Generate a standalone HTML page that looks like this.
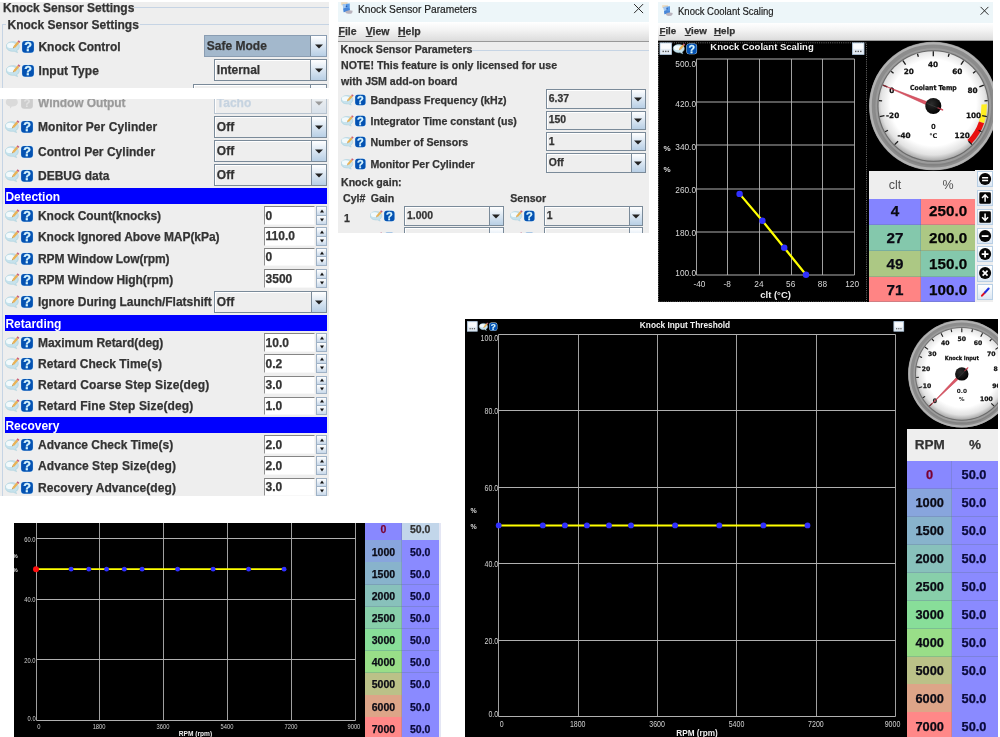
<!DOCTYPE html>
<html lang="en"><head><meta charset="utf-8"><title>Knock Sensor Settings</title>
<style>
*{box-sizing:border-box;margin:0;padding:0}
html,body{width:1000px;height:737px;overflow:hidden;background:#fff}
body{position:relative;font-family:"Liberation Sans",sans-serif;color:#333;font-size:12px;}
#w{position:absolute;left:0;top:0;width:1000px;height:737px;overflow:hidden;will-change:transform}
.p{position:absolute;overflow:hidden}
.t{position:absolute;white-space:nowrap;font-weight:bold;line-height:1;-webkit-text-stroke:0.25px currentColor}
.mn::first-letter{text-decoration:underline}
.cb{position:absolute;border:1px solid #7a8a99;background:#eee;box-shadow:inset 1px 1px 0 #fff}
.cb .tx{position:absolute;left:1.8px;top:50%;transform:translateY(-50%);font-weight:bold;white-space:nowrap;line-height:1;-webkit-text-stroke:0.25px currentColor}
.cb .bt{position:absolute;right:0;top:0;bottom:0;border-left:1px solid #7a8a99;background:linear-gradient(#fff 0%,#dde8f3 45%,#b8cfe5 100%)}
.cb .bt:after{content:"";position:absolute;left:50%;top:50%;border:4px solid transparent;border-top:4px solid #222;border-bottom:0;transform:translate(-50%,-40%)}
.sp{position:absolute}
.sp .f{position:absolute;left:0;top:0;bottom:0;background:#fff;border:1px solid #858585;border-left-color:#909090;border-right-color:#f6f6f6;border-bottom-color:#f8f8f8}
.sp .f span{position:absolute;left:0.6px;top:50%;transform:translateY(-50%);font-weight:bold;line-height:1;-webkit-text-stroke:0.25px currentColor}
.sp .u,.sp .d{position:absolute;right:0;border:1px solid #9fb2c6;background:linear-gradient(#fff,#c9d9ea)}
.sp .u:after,.sp .d:after{content:"";position:absolute;left:50%;top:50%;border:2.6px solid transparent;transform:translate(-50%,-50%)}
.sp .u:after{border-bottom:3px solid #111;border-top:0}
.sp .d:after{border-top:3px solid #111;border-bottom:0}
.bar{position:absolute;background:#0000ff;color:#fff;font-weight:bold;line-height:1;white-space:nowrap}
.bar span{position:absolute;left:0.4px;top:50%;transform:translateY(-42%)}
</style></head>
<body>
<div id="w">
<div class="p" style="left:0;top:2px;width:329px;height:85.7px;background:#eee">
<div class="p" style="left:134px;top:5px;width:195px;height:1px;background:#c6d4e4"></div>
<div class="p" style="left:2px;top:22px;width:327px;height:70px;border:1px solid #c6d4e4;border-right:0;border-bottom:0"></div>
<div class="p" style="left:6px;top:16px;width:134px;height:14px;background:#eee"></div>
<div class="t" style="left:3px;top:-0.20000000000000018px;font-size:12px;color:#333;font-weight:bold;">Knock Sensor Settings</div>
<div class="t" style="left:7.5px;top:17.1px;font-size:12px;color:#333;font-weight:bold;">Knock Sensor Settings</div>
<svg class="p" style="left:6.3px;top:37.8px;width:29.0px;height:14.0px" viewBox="0 0 29 14"><path d="M0.3 6.4 C0.3 3.4 3.2 1.7 6.8 1.7 C10.4 1.7 13.3 3.4 13.3 6.4 C13.3 8.6 12 10 10.6 10.7 L11.6 12.6 L8.2 11.2 C7.7 11.3 7.2 11.3 6.8 11.3 C3.2 11.3 0.3 9.4 0.3 6.4Z" fill="#c6e2ec" stroke="#a6cedc" stroke-width="0.6"/><ellipse cx="5.2" cy="5.4" rx="4.2" ry="2.7" fill="#f2fafc"/><path d="M6.9 8.3 L7.6 5.9 L11.5 1.5 L13.3 3.1 L9.4 7.5 Z" fill="#e9b256"/><path d="M11.5 1.5 L12.6 0.2 L14.4 1.8 L13.3 3.1 Z" fill="#c8607c"/><path d="M6.9 8.3 L7.2 7.3 L7.9 7.9 Z" fill="#777"/><rect x="15.7" y="0.5" width="12.6" height="12.6" rx="3.4" fill="#d4eefc"/><rect x="16.1" y="0.9" width="11.8" height="11.8" rx="3" fill="#0452b2"/><text x="22" y="11.3" font-family="Liberation Sans,sans-serif" font-weight="bold" font-size="12.6" fill="#d8f6ff" stroke="#d8f6ff" stroke-width="0.3" text-anchor="middle">?</text></svg>
<div class="t" style="left:38.5px;top:38.7px;font-size:12px;color:#333;font-weight:bold;letter-spacing:-0.054px;">Knock Control</div>
<div class="cb" style="left:204px;top:33px;width:123px;height:22px;background:#a3b8cc;box-shadow:none;border-color:#8a9db2;"><span class="tx" style="font-size:12px;color:#333">Safe Mode</span><div class="bt" style="width:16px;"></div></div>
<svg class="p" style="left:6.3px;top:62px;width:29.0px;height:14.0px" viewBox="0 0 29 14"><path d="M0.3 6.4 C0.3 3.4 3.2 1.7 6.8 1.7 C10.4 1.7 13.3 3.4 13.3 6.4 C13.3 8.6 12 10 10.6 10.7 L11.6 12.6 L8.2 11.2 C7.7 11.3 7.2 11.3 6.8 11.3 C3.2 11.3 0.3 9.4 0.3 6.4Z" fill="#c6e2ec" stroke="#a6cedc" stroke-width="0.6"/><ellipse cx="5.2" cy="5.4" rx="4.2" ry="2.7" fill="#f2fafc"/><path d="M6.9 8.3 L7.6 5.9 L11.5 1.5 L13.3 3.1 L9.4 7.5 Z" fill="#e9b256"/><path d="M11.5 1.5 L12.6 0.2 L14.4 1.8 L13.3 3.1 Z" fill="#c8607c"/><path d="M6.9 8.3 L7.2 7.3 L7.9 7.9 Z" fill="#777"/><rect x="15.7" y="0.5" width="12.6" height="12.6" rx="3.4" fill="#d4eefc"/><rect x="16.1" y="0.9" width="11.8" height="11.8" rx="3" fill="#0452b2"/><text x="22" y="11.3" font-family="Liberation Sans,sans-serif" font-weight="bold" font-size="12.6" fill="#d8f6ff" stroke="#d8f6ff" stroke-width="0.3" text-anchor="middle">?</text></svg>
<div class="t" style="left:38.5px;top:62.900000000000006px;font-size:12px;color:#333;font-weight:bold;letter-spacing:0.070px;">Input Type</div>
<div class="cb" style="left:214px;top:57.0px;width:113px;height:21.6px;background:#eee;"><span class="tx" style="font-size:12px;color:#333">Internal</span><div class="bt" style="width:16px;"></div></div>
<div class="cb" style="left:193px;top:81.5px;width:134px;height:22px;background:#eee;"><span class="tx" style="font-size:12px;color:#333"></span><div class="bt" style="width:16px;"></div></div>
</div>
<div class="p" style="left:0;top:98.5px;width:329px;height:397px;background:#eee">
<div class="p" style="left:2px;top:-2px;width:1px;height:400px;background:#c6d4e4"></div>
<svg class="p" style="left:5px;top:-2.7px;width:29.0px;height:14.0px" viewBox="0 0 29 14"><path d="M0.8 6.2 C0.8 3.4 3.4 1.8 6.8 1.8 C10.2 1.8 12.8 3.4 12.8 6.2 C12.8 9 10.2 10.6 6.8 10.6 L5.4 12.6 L4.6 10.2 C2.4 9.6 0.8 8.2 0.8 6.2Z" fill="#dadada"/><rect x="16.1" y="0.9" width="11.8" height="11.8" rx="3" fill="#cdcdcd"/><text x="22" y="11" font-family="Liberation Sans,sans-serif" font-weight="bold" font-size="11.5" fill="#e2e2e2" text-anchor="middle">?</text></svg>
<div class="t" style="left:38px;top:-1.5999999999999996px;font-size:12px;color:#9a9a9a;font-weight:bold;letter-spacing:-0.077px;">Window Output</div>
<div class="cb" style="left:214px;top:-6.900000000000006px;width:113px;height:22px;background:#eee;border-color:#b8c4d0;"><span class="tx" style="font-size:12px;color:#c6d3e0">Tacho</span><div class="bt" style="width:15.5px;opacity:0.4;"></div></div>
<svg class="p" style="left:5px;top:21.500000000000004px;width:29.0px;height:14.0px" viewBox="0 0 29 14"><path d="M0.3 6.4 C0.3 3.4 3.2 1.7 6.8 1.7 C10.4 1.7 13.3 3.4 13.3 6.4 C13.3 8.6 12 10 10.6 10.7 L11.6 12.6 L8.2 11.2 C7.7 11.3 7.2 11.3 6.8 11.3 C3.2 11.3 0.3 9.4 0.3 6.4Z" fill="#c6e2ec" stroke="#a6cedc" stroke-width="0.6"/><ellipse cx="5.2" cy="5.4" rx="4.2" ry="2.7" fill="#f2fafc"/><path d="M6.9 8.3 L7.6 5.9 L11.5 1.5 L13.3 3.1 L9.4 7.5 Z" fill="#e9b256"/><path d="M11.5 1.5 L12.6 0.2 L14.4 1.8 L13.3 3.1 Z" fill="#c8607c"/><path d="M6.9 8.3 L7.2 7.3 L7.9 7.9 Z" fill="#777"/><rect x="15.7" y="0.5" width="12.6" height="12.6" rx="3.4" fill="#d4eefc"/><rect x="16.1" y="0.9" width="11.8" height="11.8" rx="3" fill="#0452b2"/><text x="22" y="11.3" font-family="Liberation Sans,sans-serif" font-weight="bold" font-size="12.6" fill="#d8f6ff" stroke="#d8f6ff" stroke-width="0.3" text-anchor="middle">?</text></svg>
<div class="t" style="left:38px;top:22.6px;font-size:12px;color:#333;font-weight:bold;letter-spacing:0.060px;">Monitor Per Cylinder</div>
<div class="cb" style="left:214px;top:17.0px;width:113px;height:22px;background:#eee;"><span class="tx" style="font-size:12px;color:#333">Off</span><div class="bt" style="width:15.5px;"></div></div>
<svg class="p" style="left:5px;top:46.10000000000001px;width:29.0px;height:14.0px" viewBox="0 0 29 14"><path d="M0.3 6.4 C0.3 3.4 3.2 1.7 6.8 1.7 C10.4 1.7 13.3 3.4 13.3 6.4 C13.3 8.6 12 10 10.6 10.7 L11.6 12.6 L8.2 11.2 C7.7 11.3 7.2 11.3 6.8 11.3 C3.2 11.3 0.3 9.4 0.3 6.4Z" fill="#c6e2ec" stroke="#a6cedc" stroke-width="0.6"/><ellipse cx="5.2" cy="5.4" rx="4.2" ry="2.7" fill="#f2fafc"/><path d="M6.9 8.3 L7.6 5.9 L11.5 1.5 L13.3 3.1 L9.4 7.5 Z" fill="#e9b256"/><path d="M11.5 1.5 L12.6 0.2 L14.4 1.8 L13.3 3.1 Z" fill="#c8607c"/><path d="M6.9 8.3 L7.2 7.3 L7.9 7.9 Z" fill="#777"/><rect x="15.7" y="0.5" width="12.6" height="12.6" rx="3.4" fill="#d4eefc"/><rect x="16.1" y="0.9" width="11.8" height="11.8" rx="3" fill="#0452b2"/><text x="22" y="11.3" font-family="Liberation Sans,sans-serif" font-weight="bold" font-size="12.6" fill="#d8f6ff" stroke="#d8f6ff" stroke-width="0.3" text-anchor="middle">?</text></svg>
<div class="t" style="left:38px;top:47.20000000000001px;font-size:12px;color:#333;font-weight:bold;letter-spacing:0.020px;">Control Per Cylinder</div>
<div class="cb" style="left:214px;top:41.30000000000001px;width:113px;height:22px;background:#eee;"><span class="tx" style="font-size:12px;color:#333">Off</span><div class="bt" style="width:15.5px;"></div></div>
<svg class="p" style="left:5px;top:70.3px;width:29.0px;height:14.0px" viewBox="0 0 29 14"><path d="M0.3 6.4 C0.3 3.4 3.2 1.7 6.8 1.7 C10.4 1.7 13.3 3.4 13.3 6.4 C13.3 8.6 12 10 10.6 10.7 L11.6 12.6 L8.2 11.2 C7.7 11.3 7.2 11.3 6.8 11.3 C3.2 11.3 0.3 9.4 0.3 6.4Z" fill="#c6e2ec" stroke="#a6cedc" stroke-width="0.6"/><ellipse cx="5.2" cy="5.4" rx="4.2" ry="2.7" fill="#f2fafc"/><path d="M6.9 8.3 L7.6 5.9 L11.5 1.5 L13.3 3.1 L9.4 7.5 Z" fill="#e9b256"/><path d="M11.5 1.5 L12.6 0.2 L14.4 1.8 L13.3 3.1 Z" fill="#c8607c"/><path d="M6.9 8.3 L7.2 7.3 L7.9 7.9 Z" fill="#777"/><rect x="15.7" y="0.5" width="12.6" height="12.6" rx="3.4" fill="#d4eefc"/><rect x="16.1" y="0.9" width="11.8" height="11.8" rx="3" fill="#0452b2"/><text x="22" y="11.3" font-family="Liberation Sans,sans-serif" font-weight="bold" font-size="12.6" fill="#d8f6ff" stroke="#d8f6ff" stroke-width="0.3" text-anchor="middle">?</text></svg>
<div class="t" style="left:38px;top:71.4px;font-size:12px;color:#333;font-weight:bold;">DEBUG data</div>
<div class="cb" style="left:214px;top:65.6px;width:113px;height:22px;background:#eee;"><span class="tx" style="font-size:12px;color:#333">Off</span><div class="bt" style="width:15.5px;"></div></div>
<div class="bar" style="left:5px;top:89.5px;width:322px;height:16px;font-size:12px"><span>Detection</span></div>
<svg class="p" style="left:5px;top:110.60000000000001px;width:29.0px;height:14.0px" viewBox="0 0 29 14"><path d="M0.3 6.4 C0.3 3.4 3.2 1.7 6.8 1.7 C10.4 1.7 13.3 3.4 13.3 6.4 C13.3 8.6 12 10 10.6 10.7 L11.6 12.6 L8.2 11.2 C7.7 11.3 7.2 11.3 6.8 11.3 C3.2 11.3 0.3 9.4 0.3 6.4Z" fill="#c6e2ec" stroke="#a6cedc" stroke-width="0.6"/><ellipse cx="5.2" cy="5.4" rx="4.2" ry="2.7" fill="#f2fafc"/><path d="M6.9 8.3 L7.6 5.9 L11.5 1.5 L13.3 3.1 L9.4 7.5 Z" fill="#e9b256"/><path d="M11.5 1.5 L12.6 0.2 L14.4 1.8 L13.3 3.1 Z" fill="#c8607c"/><path d="M6.9 8.3 L7.2 7.3 L7.9 7.9 Z" fill="#777"/><rect x="15.7" y="0.5" width="12.6" height="12.6" rx="3.4" fill="#d4eefc"/><rect x="16.1" y="0.9" width="11.8" height="11.8" rx="3" fill="#0452b2"/><text x="22" y="11.3" font-family="Liberation Sans,sans-serif" font-weight="bold" font-size="12.6" fill="#d8f6ff" stroke="#d8f6ff" stroke-width="0.3" text-anchor="middle">?</text></svg>
<div class="t" style="left:38px;top:111.70000000000002px;font-size:12px;color:#333;font-weight:bold;letter-spacing:-0.053px;">Knock Count(knocks)</div>
<div class="sp" style="left:264px;top:107.9px;width:63px;height:18.8px"><div class="f" style="width:50.8px"><span style="font-size:12px">0</span></div><div class="u" style="width:10.6px;top:0;height:9.9px"></div><div class="d" style="width:10.6px;top:8.9px;height:9.9px"></div></div>
<svg class="p" style="left:5px;top:131.60000000000002px;width:29.0px;height:14.0px" viewBox="0 0 29 14"><path d="M0.3 6.4 C0.3 3.4 3.2 1.7 6.8 1.7 C10.4 1.7 13.3 3.4 13.3 6.4 C13.3 8.6 12 10 10.6 10.7 L11.6 12.6 L8.2 11.2 C7.7 11.3 7.2 11.3 6.8 11.3 C3.2 11.3 0.3 9.4 0.3 6.4Z" fill="#c6e2ec" stroke="#a6cedc" stroke-width="0.6"/><ellipse cx="5.2" cy="5.4" rx="4.2" ry="2.7" fill="#f2fafc"/><path d="M6.9 8.3 L7.6 5.9 L11.5 1.5 L13.3 3.1 L9.4 7.5 Z" fill="#e9b256"/><path d="M11.5 1.5 L12.6 0.2 L14.4 1.8 L13.3 3.1 Z" fill="#c8607c"/><path d="M6.9 8.3 L7.2 7.3 L7.9 7.9 Z" fill="#777"/><rect x="15.7" y="0.5" width="12.6" height="12.6" rx="3.4" fill="#d4eefc"/><rect x="16.1" y="0.9" width="11.8" height="11.8" rx="3" fill="#0452b2"/><text x="22" y="11.3" font-family="Liberation Sans,sans-serif" font-weight="bold" font-size="12.6" fill="#d8f6ff" stroke="#d8f6ff" stroke-width="0.3" text-anchor="middle">?</text></svg>
<div class="t" style="left:38px;top:132.70000000000002px;font-size:12px;color:#333;font-weight:bold;letter-spacing:-0.050px;">Knock Ignored Above MAP(kPa)</div>
<div class="sp" style="left:264px;top:128.6px;width:63px;height:18.8px"><div class="f" style="width:50.8px"><span style="font-size:12px">110.0</span></div><div class="u" style="width:10.6px;top:0;height:9.9px"></div><div class="d" style="width:10.6px;top:8.9px;height:9.9px"></div></div>
<svg class="p" style="left:5px;top:153.3px;width:29.0px;height:14.0px" viewBox="0 0 29 14"><path d="M0.3 6.4 C0.3 3.4 3.2 1.7 6.8 1.7 C10.4 1.7 13.3 3.4 13.3 6.4 C13.3 8.6 12 10 10.6 10.7 L11.6 12.6 L8.2 11.2 C7.7 11.3 7.2 11.3 6.8 11.3 C3.2 11.3 0.3 9.4 0.3 6.4Z" fill="#c6e2ec" stroke="#a6cedc" stroke-width="0.6"/><ellipse cx="5.2" cy="5.4" rx="4.2" ry="2.7" fill="#f2fafc"/><path d="M6.9 8.3 L7.6 5.9 L11.5 1.5 L13.3 3.1 L9.4 7.5 Z" fill="#e9b256"/><path d="M11.5 1.5 L12.6 0.2 L14.4 1.8 L13.3 3.1 Z" fill="#c8607c"/><path d="M6.9 8.3 L7.2 7.3 L7.9 7.9 Z" fill="#777"/><rect x="15.7" y="0.5" width="12.6" height="12.6" rx="3.4" fill="#d4eefc"/><rect x="16.1" y="0.9" width="11.8" height="11.8" rx="3" fill="#0452b2"/><text x="22" y="11.3" font-family="Liberation Sans,sans-serif" font-weight="bold" font-size="12.6" fill="#d8f6ff" stroke="#d8f6ff" stroke-width="0.3" text-anchor="middle">?</text></svg>
<div class="t" style="left:38px;top:154.4px;font-size:12px;color:#333;font-weight:bold;letter-spacing:-0.126px;">RPM Window Low(rpm)</div>
<div class="sp" style="left:264px;top:149.1px;width:63px;height:18.8px"><div class="f" style="width:50.8px"><span style="font-size:12px">0</span></div><div class="u" style="width:10.6px;top:0;height:9.9px"></div><div class="d" style="width:10.6px;top:8.9px;height:9.9px"></div></div>
<svg class="p" style="left:5px;top:174.60000000000002px;width:29.0px;height:14.0px" viewBox="0 0 29 14"><path d="M0.3 6.4 C0.3 3.4 3.2 1.7 6.8 1.7 C10.4 1.7 13.3 3.4 13.3 6.4 C13.3 8.6 12 10 10.6 10.7 L11.6 12.6 L8.2 11.2 C7.7 11.3 7.2 11.3 6.8 11.3 C3.2 11.3 0.3 9.4 0.3 6.4Z" fill="#c6e2ec" stroke="#a6cedc" stroke-width="0.6"/><ellipse cx="5.2" cy="5.4" rx="4.2" ry="2.7" fill="#f2fafc"/><path d="M6.9 8.3 L7.6 5.9 L11.5 1.5 L13.3 3.1 L9.4 7.5 Z" fill="#e9b256"/><path d="M11.5 1.5 L12.6 0.2 L14.4 1.8 L13.3 3.1 Z" fill="#c8607c"/><path d="M6.9 8.3 L7.2 7.3 L7.9 7.9 Z" fill="#777"/><rect x="15.7" y="0.5" width="12.6" height="12.6" rx="3.4" fill="#d4eefc"/><rect x="16.1" y="0.9" width="11.8" height="11.8" rx="3" fill="#0452b2"/><text x="22" y="11.3" font-family="Liberation Sans,sans-serif" font-weight="bold" font-size="12.6" fill="#d8f6ff" stroke="#d8f6ff" stroke-width="0.3" text-anchor="middle">?</text></svg>
<div class="t" style="left:38px;top:175.70000000000002px;font-size:12px;color:#333;font-weight:bold;letter-spacing:-0.070px;">RPM Window High(rpm)</div>
<div class="sp" style="left:264px;top:170.8px;width:63px;height:18.8px"><div class="f" style="width:50.8px"><span style="font-size:12px">3500</span></div><div class="u" style="width:10.6px;top:0;height:9.9px"></div><div class="d" style="width:10.6px;top:8.9px;height:9.9px"></div></div>
<svg class="p" style="left:5px;top:196.8px;width:29.0px;height:14.0px" viewBox="0 0 29 14"><path d="M0.3 6.4 C0.3 3.4 3.2 1.7 6.8 1.7 C10.4 1.7 13.3 3.4 13.3 6.4 C13.3 8.6 12 10 10.6 10.7 L11.6 12.6 L8.2 11.2 C7.7 11.3 7.2 11.3 6.8 11.3 C3.2 11.3 0.3 9.4 0.3 6.4Z" fill="#c6e2ec" stroke="#a6cedc" stroke-width="0.6"/><ellipse cx="5.2" cy="5.4" rx="4.2" ry="2.7" fill="#f2fafc"/><path d="M6.9 8.3 L7.6 5.9 L11.5 1.5 L13.3 3.1 L9.4 7.5 Z" fill="#e9b256"/><path d="M11.5 1.5 L12.6 0.2 L14.4 1.8 L13.3 3.1 Z" fill="#c8607c"/><path d="M6.9 8.3 L7.2 7.3 L7.9 7.9 Z" fill="#777"/><rect x="15.7" y="0.5" width="12.6" height="12.6" rx="3.4" fill="#d4eefc"/><rect x="16.1" y="0.9" width="11.8" height="11.8" rx="3" fill="#0452b2"/><text x="22" y="11.3" font-family="Liberation Sans,sans-serif" font-weight="bold" font-size="12.6" fill="#d8f6ff" stroke="#d8f6ff" stroke-width="0.3" text-anchor="middle">?</text></svg>
<div class="t" style="left:38px;top:197.9px;font-size:12px;color:#333;font-weight:bold;letter-spacing:-0.033px;">Ignore During Launch/Flatshift</div>
<div class="cb" style="left:214px;top:192.3px;width:113px;height:22px;background:#eee;"><span class="tx" style="font-size:12px;color:#333">Off</span><div class="bt" style="width:15.5px;"></div></div>
<div class="bar" style="left:5px;top:216.10000000000002px;width:322px;height:16px;font-size:12px"><span>Retarding</span></div>
<svg class="p" style="left:5px;top:237.5px;width:29.0px;height:14.0px" viewBox="0 0 29 14"><path d="M0.3 6.4 C0.3 3.4 3.2 1.7 6.8 1.7 C10.4 1.7 13.3 3.4 13.3 6.4 C13.3 8.6 12 10 10.6 10.7 L11.6 12.6 L8.2 11.2 C7.7 11.3 7.2 11.3 6.8 11.3 C3.2 11.3 0.3 9.4 0.3 6.4Z" fill="#c6e2ec" stroke="#a6cedc" stroke-width="0.6"/><ellipse cx="5.2" cy="5.4" rx="4.2" ry="2.7" fill="#f2fafc"/><path d="M6.9 8.3 L7.6 5.9 L11.5 1.5 L13.3 3.1 L9.4 7.5 Z" fill="#e9b256"/><path d="M11.5 1.5 L12.6 0.2 L14.4 1.8 L13.3 3.1 Z" fill="#c8607c"/><path d="M6.9 8.3 L7.2 7.3 L7.9 7.9 Z" fill="#777"/><rect x="15.7" y="0.5" width="12.6" height="12.6" rx="3.4" fill="#d4eefc"/><rect x="16.1" y="0.9" width="11.8" height="11.8" rx="3" fill="#0452b2"/><text x="22" y="11.3" font-family="Liberation Sans,sans-serif" font-weight="bold" font-size="12.6" fill="#d8f6ff" stroke="#d8f6ff" stroke-width="0.3" text-anchor="middle">?</text></svg>
<div class="t" style="left:38px;top:238.6px;font-size:12px;color:#333;font-weight:bold;letter-spacing:-0.037px;">Maximum Retard(deg)</div>
<div class="sp" style="left:264px;top:234.8px;width:63px;height:18.8px"><div class="f" style="width:50.8px"><span style="font-size:12px">10.0</span></div><div class="u" style="width:10.6px;top:0;height:9.9px"></div><div class="d" style="width:10.6px;top:8.9px;height:9.9px"></div></div>
<svg class="p" style="left:5px;top:258.5px;width:29.0px;height:14.0px" viewBox="0 0 29 14"><path d="M0.3 6.4 C0.3 3.4 3.2 1.7 6.8 1.7 C10.4 1.7 13.3 3.4 13.3 6.4 C13.3 8.6 12 10 10.6 10.7 L11.6 12.6 L8.2 11.2 C7.7 11.3 7.2 11.3 6.8 11.3 C3.2 11.3 0.3 9.4 0.3 6.4Z" fill="#c6e2ec" stroke="#a6cedc" stroke-width="0.6"/><ellipse cx="5.2" cy="5.4" rx="4.2" ry="2.7" fill="#f2fafc"/><path d="M6.9 8.3 L7.6 5.9 L11.5 1.5 L13.3 3.1 L9.4 7.5 Z" fill="#e9b256"/><path d="M11.5 1.5 L12.6 0.2 L14.4 1.8 L13.3 3.1 Z" fill="#c8607c"/><path d="M6.9 8.3 L7.2 7.3 L7.9 7.9 Z" fill="#777"/><rect x="15.7" y="0.5" width="12.6" height="12.6" rx="3.4" fill="#d4eefc"/><rect x="16.1" y="0.9" width="11.8" height="11.8" rx="3" fill="#0452b2"/><text x="22" y="11.3" font-family="Liberation Sans,sans-serif" font-weight="bold" font-size="12.6" fill="#d8f6ff" stroke="#d8f6ff" stroke-width="0.3" text-anchor="middle">?</text></svg>
<div class="t" style="left:38px;top:259.59999999999997px;font-size:12px;color:#333;font-weight:bold;letter-spacing:0.050px;">Retard Check Time(s)</div>
<div class="sp" style="left:264px;top:255.89999999999998px;width:63px;height:18.8px"><div class="f" style="width:50.8px"><span style="font-size:12px">0.2</span></div><div class="u" style="width:10.6px;top:0;height:9.9px"></div><div class="d" style="width:10.6px;top:8.9px;height:9.9px"></div></div>
<svg class="p" style="left:5px;top:279.8px;width:29.0px;height:14.0px" viewBox="0 0 29 14"><path d="M0.3 6.4 C0.3 3.4 3.2 1.7 6.8 1.7 C10.4 1.7 13.3 3.4 13.3 6.4 C13.3 8.6 12 10 10.6 10.7 L11.6 12.6 L8.2 11.2 C7.7 11.3 7.2 11.3 6.8 11.3 C3.2 11.3 0.3 9.4 0.3 6.4Z" fill="#c6e2ec" stroke="#a6cedc" stroke-width="0.6"/><ellipse cx="5.2" cy="5.4" rx="4.2" ry="2.7" fill="#f2fafc"/><path d="M6.9 8.3 L7.6 5.9 L11.5 1.5 L13.3 3.1 L9.4 7.5 Z" fill="#e9b256"/><path d="M11.5 1.5 L12.6 0.2 L14.4 1.8 L13.3 3.1 Z" fill="#c8607c"/><path d="M6.9 8.3 L7.2 7.3 L7.9 7.9 Z" fill="#777"/><rect x="15.7" y="0.5" width="12.6" height="12.6" rx="3.4" fill="#d4eefc"/><rect x="16.1" y="0.9" width="11.8" height="11.8" rx="3" fill="#0452b2"/><text x="22" y="11.3" font-family="Liberation Sans,sans-serif" font-weight="bold" font-size="12.6" fill="#d8f6ff" stroke="#d8f6ff" stroke-width="0.3" text-anchor="middle">?</text></svg>
<div class="t" style="left:38px;top:280.9px;font-size:12px;color:#333;font-weight:bold;letter-spacing:0.121px;">Retard Coarse Step Size(deg)</div>
<div class="sp" style="left:264px;top:277.0px;width:63px;height:18.8px"><div class="f" style="width:50.8px"><span style="font-size:12px">3.0</span></div><div class="u" style="width:10.6px;top:0;height:9.9px"></div><div class="d" style="width:10.6px;top:8.9px;height:9.9px"></div></div>
<svg class="p" style="left:5px;top:300.8px;width:29.0px;height:14.0px" viewBox="0 0 29 14"><path d="M0.3 6.4 C0.3 3.4 3.2 1.7 6.8 1.7 C10.4 1.7 13.3 3.4 13.3 6.4 C13.3 8.6 12 10 10.6 10.7 L11.6 12.6 L8.2 11.2 C7.7 11.3 7.2 11.3 6.8 11.3 C3.2 11.3 0.3 9.4 0.3 6.4Z" fill="#c6e2ec" stroke="#a6cedc" stroke-width="0.6"/><ellipse cx="5.2" cy="5.4" rx="4.2" ry="2.7" fill="#f2fafc"/><path d="M6.9 8.3 L7.6 5.9 L11.5 1.5 L13.3 3.1 L9.4 7.5 Z" fill="#e9b256"/><path d="M11.5 1.5 L12.6 0.2 L14.4 1.8 L13.3 3.1 Z" fill="#c8607c"/><path d="M6.9 8.3 L7.2 7.3 L7.9 7.9 Z" fill="#777"/><rect x="15.7" y="0.5" width="12.6" height="12.6" rx="3.4" fill="#d4eefc"/><rect x="16.1" y="0.9" width="11.8" height="11.8" rx="3" fill="#0452b2"/><text x="22" y="11.3" font-family="Liberation Sans,sans-serif" font-weight="bold" font-size="12.6" fill="#d8f6ff" stroke="#d8f6ff" stroke-width="0.3" text-anchor="middle">?</text></svg>
<div class="t" style="left:38px;top:301.9px;font-size:12px;color:#333;font-weight:bold;letter-spacing:0.131px;">Retard Fine Step Size(deg)</div>
<div class="sp" style="left:264px;top:298.0px;width:63px;height:18.8px"><div class="f" style="width:50.8px"><span style="font-size:12px">1.0</span></div><div class="u" style="width:10.6px;top:0;height:9.9px"></div><div class="d" style="width:10.6px;top:8.9px;height:9.9px"></div></div>
<div class="bar" style="left:5px;top:318.5px;width:322px;height:15.8px;font-size:12px"><span>Recovery</span></div>
<svg class="p" style="left:5px;top:339.8px;width:29.0px;height:14.0px" viewBox="0 0 29 14"><path d="M0.3 6.4 C0.3 3.4 3.2 1.7 6.8 1.7 C10.4 1.7 13.3 3.4 13.3 6.4 C13.3 8.6 12 10 10.6 10.7 L11.6 12.6 L8.2 11.2 C7.7 11.3 7.2 11.3 6.8 11.3 C3.2 11.3 0.3 9.4 0.3 6.4Z" fill="#c6e2ec" stroke="#a6cedc" stroke-width="0.6"/><ellipse cx="5.2" cy="5.4" rx="4.2" ry="2.7" fill="#f2fafc"/><path d="M6.9 8.3 L7.6 5.9 L11.5 1.5 L13.3 3.1 L9.4 7.5 Z" fill="#e9b256"/><path d="M11.5 1.5 L12.6 0.2 L14.4 1.8 L13.3 3.1 Z" fill="#c8607c"/><path d="M6.9 8.3 L7.2 7.3 L7.9 7.9 Z" fill="#777"/><rect x="15.7" y="0.5" width="12.6" height="12.6" rx="3.4" fill="#d4eefc"/><rect x="16.1" y="0.9" width="11.8" height="11.8" rx="3" fill="#0452b2"/><text x="22" y="11.3" font-family="Liberation Sans,sans-serif" font-weight="bold" font-size="12.6" fill="#d8f6ff" stroke="#d8f6ff" stroke-width="0.3" text-anchor="middle">?</text></svg>
<div class="t" style="left:38px;top:340.9px;font-size:12px;color:#333;font-weight:bold;">Advance Check Time(s)</div>
<div class="sp" style="left:264px;top:336.8px;width:63px;height:18.8px"><div class="f" style="width:50.8px"><span style="font-size:12px">2.0</span></div><div class="u" style="width:10.6px;top:0;height:9.9px"></div><div class="d" style="width:10.6px;top:8.9px;height:9.9px"></div></div>
<svg class="p" style="left:5px;top:360.8px;width:29.0px;height:14.0px" viewBox="0 0 29 14"><path d="M0.3 6.4 C0.3 3.4 3.2 1.7 6.8 1.7 C10.4 1.7 13.3 3.4 13.3 6.4 C13.3 8.6 12 10 10.6 10.7 L11.6 12.6 L8.2 11.2 C7.7 11.3 7.2 11.3 6.8 11.3 C3.2 11.3 0.3 9.4 0.3 6.4Z" fill="#c6e2ec" stroke="#a6cedc" stroke-width="0.6"/><ellipse cx="5.2" cy="5.4" rx="4.2" ry="2.7" fill="#f2fafc"/><path d="M6.9 8.3 L7.6 5.9 L11.5 1.5 L13.3 3.1 L9.4 7.5 Z" fill="#e9b256"/><path d="M11.5 1.5 L12.6 0.2 L14.4 1.8 L13.3 3.1 Z" fill="#c8607c"/><path d="M6.9 8.3 L7.2 7.3 L7.9 7.9 Z" fill="#777"/><rect x="15.7" y="0.5" width="12.6" height="12.6" rx="3.4" fill="#d4eefc"/><rect x="16.1" y="0.9" width="11.8" height="11.8" rx="3" fill="#0452b2"/><text x="22" y="11.3" font-family="Liberation Sans,sans-serif" font-weight="bold" font-size="12.6" fill="#d8f6ff" stroke="#d8f6ff" stroke-width="0.3" text-anchor="middle">?</text></svg>
<div class="t" style="left:38px;top:361.9px;font-size:12px;color:#333;font-weight:bold;letter-spacing:0.091px;">Advance Step Size(deg)</div>
<div class="sp" style="left:264px;top:357.9px;width:63px;height:18.8px"><div class="f" style="width:50.8px"><span style="font-size:12px">2.0</span></div><div class="u" style="width:10.6px;top:0;height:9.9px"></div><div class="d" style="width:10.6px;top:8.9px;height:9.9px"></div></div>
<svg class="p" style="left:5px;top:382.1px;width:29.0px;height:14.0px" viewBox="0 0 29 14"><path d="M0.3 6.4 C0.3 3.4 3.2 1.7 6.8 1.7 C10.4 1.7 13.3 3.4 13.3 6.4 C13.3 8.6 12 10 10.6 10.7 L11.6 12.6 L8.2 11.2 C7.7 11.3 7.2 11.3 6.8 11.3 C3.2 11.3 0.3 9.4 0.3 6.4Z" fill="#c6e2ec" stroke="#a6cedc" stroke-width="0.6"/><ellipse cx="5.2" cy="5.4" rx="4.2" ry="2.7" fill="#f2fafc"/><path d="M6.9 8.3 L7.6 5.9 L11.5 1.5 L13.3 3.1 L9.4 7.5 Z" fill="#e9b256"/><path d="M11.5 1.5 L12.6 0.2 L14.4 1.8 L13.3 3.1 Z" fill="#c8607c"/><path d="M6.9 8.3 L7.2 7.3 L7.9 7.9 Z" fill="#777"/><rect x="15.7" y="0.5" width="12.6" height="12.6" rx="3.4" fill="#d4eefc"/><rect x="16.1" y="0.9" width="11.8" height="11.8" rx="3" fill="#0452b2"/><text x="22" y="11.3" font-family="Liberation Sans,sans-serif" font-weight="bold" font-size="12.6" fill="#d8f6ff" stroke="#d8f6ff" stroke-width="0.3" text-anchor="middle">?</text></svg>
<div class="t" style="left:38px;top:383.2px;font-size:12px;color:#333;font-weight:bold;letter-spacing:0.081px;">Recovery Advance(deg)</div>
<div class="sp" style="left:264px;top:379.0px;width:63px;height:18.8px"><div class="f" style="width:50.8px"><span style="font-size:12px">3.0</span></div><div class="u" style="width:10.6px;top:0;height:9.9px"></div><div class="d" style="width:10.6px;top:8.9px;height:9.9px"></div></div>
</div>
<div class="p" style="left:338px;top:2px;width:311px;height:230.5px;background:#eee"></div>
<div class="p" style="left:338px;top:2px;width:311px;height:19.5px;background:#edf6f9"></div>
<svg class="p" style="left:341.1px;top:2.0px;width:12.2px;height:12.2px" viewBox="0 0 13 13"><path d="M0.2 0.2h6.8v3.2h-6.8z" fill="#ead6b4" opacity="0.85"/><path d="M1.8 2.4 L9.3 1.5 L9.3 8.8 L3 10.8 Z" fill="#5a9ce8"/><path d="M1.8 2.4 L5.4 2 L5.2 6 L2.4 7.2 Z" fill="#a4c8f0"/><path d="M2.4 7.2 L5.2 6 L9.3 7 L9.3 8.8 L3 10.8 Z" fill="#4886d8"/><circle cx="5.9" cy="4.5" r="0.9" fill="#2a5cb0"/><path d="M4.2 10.4 Q7.6 7.8 12.4 9.2 Q12.4 13 8.4 12.6 Q5.4 13 4.2 10.4Z" fill="#b2acb6" opacity="0.9"/></svg>
<div class="t" style="left:358px;top:2.5px;font-size:11.6px;font-weight:normal;-webkit-text-stroke:0.2px #1a1a1a;color:#1a1a1a;transform-origin:0 50%;transform:scaleX(0.878)">Knock Sensor Parameters</div>
<svg class="p" style="left:629px;top:2px;width:20px;height:19.5px" viewBox="629 2 20 19.5"><path d="M634.1 4.1L643.1 13.1M643.1 4.1L634.1 13.1" stroke="#2a2a2a" stroke-width="1" fill="none"/></svg>
<div class="p" style="left:338px;top:21.5px;width:311px;height:20px;background:linear-gradient(#fff 0%,#f4f4f4 40%,#dcdcdc 100%);border-bottom:1px solid #999"></div>
<div class="t mn" style="left:338.5px;top:25.75px;font-size:10.5px;color:#333">File</div>
<div class="t mn" style="left:365.7px;top:25.75px;font-size:10.5px;color:#333">View</div>
<div class="t mn" style="left:398px;top:25.75px;font-size:10.5px;color:#333">Help</div>
<div class="p" style="left:338px;top:2px;width:311px;height:230.5px;overflow:hidden">
<div class="p" style="left:134px;top:47.5px;width:180px;height:1px;background:#c6d4e4"></div>
<div class="t" style="left:2.5px;top:42.2px;font-size:10.6px;color:#333;font-weight:bold;">Knock Sensor Parameters</div>
<div class="t" style="left:3px;top:58.2px;font-size:10.6px;color:#333;font-weight:bold;">NOTE! This feature is only licensed for use</div>
<div class="t" style="left:3px;top:74.0px;font-size:10.6px;color:#333;font-weight:bold;">with JSM add-on board</div>
<svg class="p" style="left:3.1999999999999886px;top:91.8px;width:25.52px;height:12.32px" viewBox="0 0 29 14"><path d="M0.3 6.4 C0.3 3.4 3.2 1.7 6.8 1.7 C10.4 1.7 13.3 3.4 13.3 6.4 C13.3 8.6 12 10 10.6 10.7 L11.6 12.6 L8.2 11.2 C7.7 11.3 7.2 11.3 6.8 11.3 C3.2 11.3 0.3 9.4 0.3 6.4Z" fill="#c6e2ec" stroke="#a6cedc" stroke-width="0.6"/><ellipse cx="5.2" cy="5.4" rx="4.2" ry="2.7" fill="#f2fafc"/><path d="M6.9 8.3 L7.6 5.9 L11.5 1.5 L13.3 3.1 L9.4 7.5 Z" fill="#e9b256"/><path d="M11.5 1.5 L12.6 0.2 L14.4 1.8 L13.3 3.1 Z" fill="#c8607c"/><path d="M6.9 8.3 L7.2 7.3 L7.9 7.9 Z" fill="#777"/><rect x="15.7" y="0.5" width="12.6" height="12.6" rx="3.4" fill="#d4eefc"/><rect x="16.1" y="0.9" width="11.8" height="11.8" rx="3" fill="#0452b2"/><text x="22" y="11.3" font-family="Liberation Sans,sans-serif" font-weight="bold" font-size="12.6" fill="#d8f6ff" stroke="#d8f6ff" stroke-width="0.3" text-anchor="middle">?</text></svg>
<div class="t" style="left:32.5px;top:92.8px;font-size:10.6px;color:#333;font-weight:bold;">Bandpass Frequency (kHz)</div>
<div class="cb" style="left:208px;top:87.3px;width:99.5px;height:19.6px;background:#eee;"><span class="tx" style="font-size:10.4px;color:#333">6.37</span><div class="bt" style="width:13.6px;"></div></div>
<svg class="p" style="left:3.1999999999999886px;top:113.0px;width:25.52px;height:12.32px" viewBox="0 0 29 14"><path d="M0.3 6.4 C0.3 3.4 3.2 1.7 6.8 1.7 C10.4 1.7 13.3 3.4 13.3 6.4 C13.3 8.6 12 10 10.6 10.7 L11.6 12.6 L8.2 11.2 C7.7 11.3 7.2 11.3 6.8 11.3 C3.2 11.3 0.3 9.4 0.3 6.4Z" fill="#c6e2ec" stroke="#a6cedc" stroke-width="0.6"/><ellipse cx="5.2" cy="5.4" rx="4.2" ry="2.7" fill="#f2fafc"/><path d="M6.9 8.3 L7.6 5.9 L11.5 1.5 L13.3 3.1 L9.4 7.5 Z" fill="#e9b256"/><path d="M11.5 1.5 L12.6 0.2 L14.4 1.8 L13.3 3.1 Z" fill="#c8607c"/><path d="M6.9 8.3 L7.2 7.3 L7.9 7.9 Z" fill="#777"/><rect x="15.7" y="0.5" width="12.6" height="12.6" rx="3.4" fill="#d4eefc"/><rect x="16.1" y="0.9" width="11.8" height="11.8" rx="3" fill="#0452b2"/><text x="22" y="11.3" font-family="Liberation Sans,sans-serif" font-weight="bold" font-size="12.6" fill="#d8f6ff" stroke="#d8f6ff" stroke-width="0.3" text-anchor="middle">?</text></svg>
<div class="t" style="left:32.5px;top:114.0px;font-size:10.6px;color:#333;font-weight:bold;">Integrator Time constant (us)</div>
<div class="cb" style="left:208px;top:108.5px;width:99.5px;height:19.6px;background:#eee;"><span class="tx" style="font-size:10.4px;color:#333">150</span><div class="bt" style="width:13.6px;"></div></div>
<svg class="p" style="left:3.1999999999999886px;top:134.3px;width:25.52px;height:12.32px" viewBox="0 0 29 14"><path d="M0.3 6.4 C0.3 3.4 3.2 1.7 6.8 1.7 C10.4 1.7 13.3 3.4 13.3 6.4 C13.3 8.6 12 10 10.6 10.7 L11.6 12.6 L8.2 11.2 C7.7 11.3 7.2 11.3 6.8 11.3 C3.2 11.3 0.3 9.4 0.3 6.4Z" fill="#c6e2ec" stroke="#a6cedc" stroke-width="0.6"/><ellipse cx="5.2" cy="5.4" rx="4.2" ry="2.7" fill="#f2fafc"/><path d="M6.9 8.3 L7.6 5.9 L11.5 1.5 L13.3 3.1 L9.4 7.5 Z" fill="#e9b256"/><path d="M11.5 1.5 L12.6 0.2 L14.4 1.8 L13.3 3.1 Z" fill="#c8607c"/><path d="M6.9 8.3 L7.2 7.3 L7.9 7.9 Z" fill="#777"/><rect x="15.7" y="0.5" width="12.6" height="12.6" rx="3.4" fill="#d4eefc"/><rect x="16.1" y="0.9" width="11.8" height="11.8" rx="3" fill="#0452b2"/><text x="22" y="11.3" font-family="Liberation Sans,sans-serif" font-weight="bold" font-size="12.6" fill="#d8f6ff" stroke="#d8f6ff" stroke-width="0.3" text-anchor="middle">?</text></svg>
<div class="t" style="left:32.5px;top:135.29999999999998px;font-size:10.6px;color:#333;font-weight:bold;">Number of Sensors</div>
<div class="cb" style="left:208px;top:129.8px;width:99.5px;height:19.6px;background:#eee;"><span class="tx" style="font-size:10.4px;color:#333">1</span><div class="bt" style="width:13.6px;"></div></div>
<svg class="p" style="left:3.1999999999999886px;top:155.60000000000002px;width:25.52px;height:12.32px" viewBox="0 0 29 14"><path d="M0.3 6.4 C0.3 3.4 3.2 1.7 6.8 1.7 C10.4 1.7 13.3 3.4 13.3 6.4 C13.3 8.6 12 10 10.6 10.7 L11.6 12.6 L8.2 11.2 C7.7 11.3 7.2 11.3 6.8 11.3 C3.2 11.3 0.3 9.4 0.3 6.4Z" fill="#c6e2ec" stroke="#a6cedc" stroke-width="0.6"/><ellipse cx="5.2" cy="5.4" rx="4.2" ry="2.7" fill="#f2fafc"/><path d="M6.9 8.3 L7.6 5.9 L11.5 1.5 L13.3 3.1 L9.4 7.5 Z" fill="#e9b256"/><path d="M11.5 1.5 L12.6 0.2 L14.4 1.8 L13.3 3.1 Z" fill="#c8607c"/><path d="M6.9 8.3 L7.2 7.3 L7.9 7.9 Z" fill="#777"/><rect x="15.7" y="0.5" width="12.6" height="12.6" rx="3.4" fill="#d4eefc"/><rect x="16.1" y="0.9" width="11.8" height="11.8" rx="3" fill="#0452b2"/><text x="22" y="11.3" font-family="Liberation Sans,sans-serif" font-weight="bold" font-size="12.6" fill="#d8f6ff" stroke="#d8f6ff" stroke-width="0.3" text-anchor="middle">?</text></svg>
<div class="t" style="left:32.5px;top:156.6px;font-size:10.6px;color:#333;font-weight:bold;">Monitor Per Cylinder</div>
<div class="cb" style="left:208px;top:151.10000000000002px;width:99.5px;height:19.6px;background:#eee;"><span class="tx" style="font-size:10.4px;color:#333">Off</span><div class="bt" style="width:13.6px;"></div></div>
<div class="t" style="left:3px;top:174.7px;font-size:10.6px;color:#333;font-weight:bold;">Knock gain:</div>
<div class="t" style="left:5px;top:190.89999999999998px;font-size:10.6px;color:#333;font-weight:bold;">Cyl#</div>
<div class="t" style="left:32.69999999999999px;top:190.89999999999998px;font-size:10.6px;color:#333;font-weight:bold;">Gain</div>
<div class="t" style="left:172.3px;top:190.89999999999998px;font-size:10.6px;color:#333;font-weight:bold;">Sensor</div>
<div class="t" style="left:6px;top:210.79999999999998px;font-size:10.6px;color:#333;font-weight:bold;">1</div>
<svg class="p" style="left:32.10000000000002px;top:208.20000000000002px;width:25.52px;height:12.32px" viewBox="0 0 29 14"><path d="M0.3 6.4 C0.3 3.4 3.2 1.7 6.8 1.7 C10.4 1.7 13.3 3.4 13.3 6.4 C13.3 8.6 12 10 10.6 10.7 L11.6 12.6 L8.2 11.2 C7.7 11.3 7.2 11.3 6.8 11.3 C3.2 11.3 0.3 9.4 0.3 6.4Z" fill="#c6e2ec" stroke="#a6cedc" stroke-width="0.6"/><ellipse cx="5.2" cy="5.4" rx="4.2" ry="2.7" fill="#f2fafc"/><path d="M6.9 8.3 L7.6 5.9 L11.5 1.5 L13.3 3.1 L9.4 7.5 Z" fill="#e9b256"/><path d="M11.5 1.5 L12.6 0.2 L14.4 1.8 L13.3 3.1 Z" fill="#c8607c"/><path d="M6.9 8.3 L7.2 7.3 L7.9 7.9 Z" fill="#777"/><rect x="15.7" y="0.5" width="12.6" height="12.6" rx="3.4" fill="#d4eefc"/><rect x="16.1" y="0.9" width="11.8" height="11.8" rx="3" fill="#0452b2"/><text x="22" y="11.3" font-family="Liberation Sans,sans-serif" font-weight="bold" font-size="12.6" fill="#d8f6ff" stroke="#d8f6ff" stroke-width="0.3" text-anchor="middle">?</text></svg>
<div class="cb" style="left:66.30000000000001px;top:204.3px;width:99.3px;height:19.4px;background:#eee;"><span class="tx" style="font-size:10.4px;color:#333">1.000</span><div class="bt" style="width:13.6px;"></div></div>
<svg class="p" style="left:172.2px;top:208.20000000000002px;width:25.52px;height:12.32px" viewBox="0 0 29 14"><path d="M0.3 6.4 C0.3 3.4 3.2 1.7 6.8 1.7 C10.4 1.7 13.3 3.4 13.3 6.4 C13.3 8.6 12 10 10.6 10.7 L11.6 12.6 L8.2 11.2 C7.7 11.3 7.2 11.3 6.8 11.3 C3.2 11.3 0.3 9.4 0.3 6.4Z" fill="#c6e2ec" stroke="#a6cedc" stroke-width="0.6"/><ellipse cx="5.2" cy="5.4" rx="4.2" ry="2.7" fill="#f2fafc"/><path d="M6.9 8.3 L7.6 5.9 L11.5 1.5 L13.3 3.1 L9.4 7.5 Z" fill="#e9b256"/><path d="M11.5 1.5 L12.6 0.2 L14.4 1.8 L13.3 3.1 Z" fill="#c8607c"/><path d="M6.9 8.3 L7.2 7.3 L7.9 7.9 Z" fill="#777"/><rect x="15.7" y="0.5" width="12.6" height="12.6" rx="3.4" fill="#d4eefc"/><rect x="16.1" y="0.9" width="11.8" height="11.8" rx="3" fill="#0452b2"/><text x="22" y="11.3" font-family="Liberation Sans,sans-serif" font-weight="bold" font-size="12.6" fill="#d8f6ff" stroke="#d8f6ff" stroke-width="0.3" text-anchor="middle">?</text></svg>
<div class="cb" style="left:206px;top:204.3px;width:99.4px;height:19.4px;background:#eee;"><span class="tx" style="font-size:10.4px;color:#333">1</span><div class="bt" style="width:13.6px;"></div></div>
<svg class="p" style="left:32.30000000000001px;top:230.10000000000002px;width:25.52px;height:12.32px" viewBox="0 0 29 14"><path d="M0.3 6.4 C0.3 3.4 3.2 1.7 6.8 1.7 C10.4 1.7 13.3 3.4 13.3 6.4 C13.3 8.6 12 10 10.6 10.7 L11.6 12.6 L8.2 11.2 C7.7 11.3 7.2 11.3 6.8 11.3 C3.2 11.3 0.3 9.4 0.3 6.4Z" fill="#c6e2ec" stroke="#a6cedc" stroke-width="0.6"/><ellipse cx="5.2" cy="5.4" rx="4.2" ry="2.7" fill="#f2fafc"/><path d="M6.9 8.3 L7.6 5.9 L11.5 1.5 L13.3 3.1 L9.4 7.5 Z" fill="#e9b256"/><path d="M11.5 1.5 L12.6 0.2 L14.4 1.8 L13.3 3.1 Z" fill="#c8607c"/><path d="M6.9 8.3 L7.2 7.3 L7.9 7.9 Z" fill="#777"/><rect x="15.7" y="0.5" width="12.6" height="12.6" rx="3.4" fill="#d4eefc"/><rect x="16.1" y="0.9" width="11.8" height="11.8" rx="3" fill="#0452b2"/><text x="22" y="11.3" font-family="Liberation Sans,sans-serif" font-weight="bold" font-size="12.6" fill="#d8f6ff" stroke="#d8f6ff" stroke-width="0.3" text-anchor="middle">?</text></svg>
<div class="cb" style="left:66.30000000000001px;top:225.4px;width:99.3px;height:19.4px;background:#eee;"><span class="tx" style="font-size:10.4px;color:#333"></span><div class="bt" style="width:13.6px;"></div></div>
<svg class="p" style="left:172.2px;top:230.10000000000002px;width:25.52px;height:12.32px" viewBox="0 0 29 14"><path d="M0.3 6.4 C0.3 3.4 3.2 1.7 6.8 1.7 C10.4 1.7 13.3 3.4 13.3 6.4 C13.3 8.6 12 10 10.6 10.7 L11.6 12.6 L8.2 11.2 C7.7 11.3 7.2 11.3 6.8 11.3 C3.2 11.3 0.3 9.4 0.3 6.4Z" fill="#c6e2ec" stroke="#a6cedc" stroke-width="0.6"/><ellipse cx="5.2" cy="5.4" rx="4.2" ry="2.7" fill="#f2fafc"/><path d="M6.9 8.3 L7.6 5.9 L11.5 1.5 L13.3 3.1 L9.4 7.5 Z" fill="#e9b256"/><path d="M11.5 1.5 L12.6 0.2 L14.4 1.8 L13.3 3.1 Z" fill="#c8607c"/><path d="M6.9 8.3 L7.2 7.3 L7.9 7.9 Z" fill="#777"/><rect x="15.7" y="0.5" width="12.6" height="12.6" rx="3.4" fill="#d4eefc"/><rect x="16.1" y="0.9" width="11.8" height="11.8" rx="3" fill="#0452b2"/><text x="22" y="11.3" font-family="Liberation Sans,sans-serif" font-weight="bold" font-size="12.6" fill="#d8f6ff" stroke="#d8f6ff" stroke-width="0.3" text-anchor="middle">?</text></svg>
<div class="cb" style="left:206px;top:225.4px;width:99.4px;height:19.4px;background:#eee;"><span class="tx" style="font-size:10.4px;color:#333"></span><div class="bt" style="width:13.6px;"></div></div>
</div>
<div class="p" style="left:658px;top:2px;width:335px;height:299.5px;background:#000"></div>
<div class="p" style="left:658px;top:2px;width:335px;height:20.5px;background:#edf6f9"></div>
<svg class="p" style="left:662.0px;top:5.0px;width:11.2px;height:11.2px" viewBox="0 0 13 13"><path d="M0.2 0.2h6.8v3.2h-6.8z" fill="#ead6b4" opacity="0.85"/><path d="M1.8 2.4 L9.3 1.5 L9.3 8.8 L3 10.8 Z" fill="#5a9ce8"/><path d="M1.8 2.4 L5.4 2 L5.2 6 L2.4 7.2 Z" fill="#a4c8f0"/><path d="M2.4 7.2 L5.2 6 L9.3 7 L9.3 8.8 L3 10.8 Z" fill="#4886d8"/><circle cx="5.9" cy="4.5" r="0.9" fill="#2a5cb0"/><path d="M4.2 10.4 Q7.6 7.8 12.4 9.2 Q12.4 13 8.4 12.6 Q5.4 13 4.2 10.4Z" fill="#b2acb6" opacity="0.9"/></svg>
<div class="t" style="left:678px;top:4.800000000000001px;font-size:11.6px;font-weight:normal;-webkit-text-stroke:0.2px #1a1a1a;color:#1a1a1a;transform-origin:0 50%;transform:scaleX(0.82)">Knock Coolant Scaling</div>
<svg class="p" style="left:973px;top:2px;width:20px;height:20.5px" viewBox="973 2 20 20.5"><path d="M980.6 6.9L988.4 14.700000000000001M988.4 6.9L980.6 14.700000000000001" stroke="#2a2a2a" stroke-width="1" fill="none"/></svg>
<div class="p" style="left:658px;top:22.5px;width:335px;height:18px;background:linear-gradient(#fff 0%,#f4f4f4 40%,#dcdcdc 100%);border-bottom:1px solid #999"></div>
<div class="t mn" style="left:659.4px;top:26.1px;font-size:9.8px;color:#333">File</div>
<div class="t mn" style="left:684.7px;top:26.1px;font-size:9.8px;color:#333">View</div>
<div class="t mn" style="left:713.9px;top:26.1px;font-size:9.8px;color:#333">Help</div>
<svg class="p" style="left:658px;top:40px;width:335px;height:262px" viewBox="658 40 335 262" font-family="Liberation Sans,sans-serif"><g transform="translate(0,0.5)"><rect x="658.5" y="42.3" width="208" height="259" fill="none" stroke="#999" stroke-width="0.7" stroke-dasharray="1 1.2"/><line x1="696.5" y1="58.5" x2="696.5" y2="274.5" stroke="#a0a0a0" stroke-width="1"/><line x1="727.5" y1="58.5" x2="727.5" y2="274.5" stroke="#a0a0a0" stroke-width="1"/><line x1="759.5" y1="58.5" x2="759.5" y2="274.5" stroke="#a0a0a0" stroke-width="1"/><line x1="791.5" y1="58.5" x2="791.5" y2="274.5" stroke="#a0a0a0" stroke-width="1"/><line x1="822.5" y1="58.5" x2="822.5" y2="274.5" stroke="#a0a0a0" stroke-width="1"/><line x1="854.5" y1="58.5" x2="854.5" y2="274.5" stroke="#a0a0a0" stroke-width="1"/><line x1="696.5" y1="58.5" x2="854.5" y2="58.5" stroke="#b0b0b0" stroke-width="1"/><line x1="696.5" y1="101.5" x2="854.5" y2="101.5" stroke="#b0b0b0" stroke-width="1"/><line x1="696.5" y1="144.5" x2="854.5" y2="144.5" stroke="#b0b0b0" stroke-width="1"/><line x1="696.5" y1="188.5" x2="854.5" y2="188.5" stroke="#b0b0b0" stroke-width="1"/><line x1="696.5" y1="231.5" x2="854.5" y2="231.5" stroke="#b0b0b0" stroke-width="1"/><line x1="696.5" y1="274.5" x2="854.5" y2="274.5" stroke="#b0b0b0" stroke-width="1"/><text transform="translate(696,66.2) scale(0.9,1)" font-size="9.2" fill="#d8d8d8" text-anchor="end" font-weight="normal" >500.0</text><text transform="translate(696,106.20000000000002) scale(0.9,1)" font-size="9.2" fill="#d8d8d8" text-anchor="end" font-weight="normal" >420.0</text><text transform="translate(696,149.29999999999998) scale(0.9,1)" font-size="9.2" fill="#d8d8d8" text-anchor="end" font-weight="normal" >340.0</text><text transform="translate(696,192.39999999999998) scale(0.9,1)" font-size="9.2" fill="#d8d8d8" text-anchor="end" font-weight="normal" >260.0</text><text transform="translate(696,235.5) scale(0.9,1)" font-size="9.2" fill="#d8d8d8" text-anchor="end" font-weight="normal" >180.0</text><text transform="translate(696,275.09999999999997) scale(0.9,1)" font-size="9.2" fill="#d8d8d8" text-anchor="end" font-weight="normal" >100.0</text><text transform="translate(699.5,286.3) scale(0.9,1)" font-size="9.2" fill="#d8d8d8" text-anchor="middle" font-weight="normal" >-40</text><text transform="translate(727.22,286.3) scale(0.9,1)" font-size="9.2" fill="#d8d8d8" text-anchor="middle" font-weight="normal" >-8</text><text transform="translate(758.94,286.3) scale(0.9,1)" font-size="9.2" fill="#d8d8d8" text-anchor="middle" font-weight="normal" >24</text><text transform="translate(790.66,286.3) scale(0.9,1)" font-size="9.2" fill="#d8d8d8" text-anchor="middle" font-weight="normal" >56</text><text transform="translate(822.38,286.3) scale(0.9,1)" font-size="9.2" fill="#d8d8d8" text-anchor="middle" font-weight="normal" >88</text><text transform="translate(852.1,286.3) scale(0.9,1)" font-size="9.2" fill="#d8d8d8" text-anchor="middle" font-weight="normal" >120</text><text x="775.6" y="297.1" font-size="9.5" fill="#eee" text-anchor="middle" font-weight="bold" >clt (°C)</text><text x="667" y="150.2" font-size="8" fill="#ddd" text-anchor="middle" font-weight="bold" >%</text><text x="667" y="171.2" font-size="8" fill="#ddd" text-anchor="middle" font-weight="bold" >%</text><text x="762" y="49.8" font-size="9.5" fill="#f4f4f4" text-anchor="middle" font-weight="bold" >Knock Coolant Scaling</text><rect x="660" y="42.4" width="11.5" height="11.5" fill="#e4ecf4" stroke="#b8cfe5" stroke-width="0.8"/><rect x="660.8" y="43.199999999999996" width="9.9" height="5.175" fill="#fff" opacity="0.8"/><rect x="662.53" y="50.22" width="1.38" height="1.38" fill="#555"/><rect x="665.06" y="50.22" width="1.38" height="1.38" fill="#555"/><rect x="667.5899999999999" y="50.22" width="1.38" height="1.38" fill="#555"/><rect x="852.5" y="42.4" width="11.5" height="11.5" fill="#e4ecf4" stroke="#b8cfe5" stroke-width="0.8"/><rect x="853.3" y="43.199999999999996" width="9.9" height="5.175" fill="#fff" opacity="0.8"/><rect x="855.03" y="50.22" width="1.38" height="1.38" fill="#555"/><rect x="857.56" y="50.22" width="1.38" height="1.38" fill="#555"/><rect x="860.0899999999999" y="50.22" width="1.38" height="1.38" fill="#555"/><g transform="translate(673,42.6) scale(0.85)"><path d="M0.3 6.4 C0.3 3.4 3.2 1.7 6.8 1.7 C10.4 1.7 13.3 3.4 13.3 6.4 C13.3 8.6 12 10 10.6 10.7 L11.6 12.6 L8.2 11.2 C7.7 11.3 7.2 11.3 6.8 11.3 C3.2 11.3 0.3 9.4 0.3 6.4Z" fill="#c6e2ec" stroke="#a6cedc" stroke-width="0.6"/><ellipse cx="5.2" cy="5.4" rx="4.2" ry="2.7" fill="#f2fafc"/><path d="M6.9 8.3 L7.6 5.9 L11.5 1.5 L13.3 3.1 L9.4 7.5 Z" fill="#e9b256"/><path d="M11.5 1.5 L12.6 0.2 L14.4 1.8 L13.3 3.1 Z" fill="#c8607c"/><path d="M6.9 8.3 L7.2 7.3 L7.9 7.9 Z" fill="#777"/><rect x="15.7" y="0.5" width="12.6" height="12.6" rx="3.4" fill="#d4eefc"/><rect x="16.1" y="0.9" width="11.8" height="11.8" rx="3" fill="#0452b2"/><text x="22" y="11.3" font-family="Liberation Sans,sans-serif" font-weight="bold" font-size="12.6" fill="#d8f6ff" stroke="#d8f6ff" stroke-width="0.3" text-anchor="middle">?</text></g><polyline points="739.6,193.4 762.4,220.3 784.2,247.3 806.0,274.2" stroke="#ffff00" stroke-width="2.2" fill="none"/><circle cx="739.6" cy="193.4" r="3.2" fill="#3030ff"/><circle cx="762.4" cy="220.3" r="3.2" fill="#3030ff"/><circle cx="784.2" cy="247.3" r="3.2" fill="#3030ff"/><circle cx="806.0" cy="274.2" r="3.2" fill="#3030ff"/><defs><radialGradient id="g933f" cx="0.5" cy="0.47" r="0.53"><stop offset="0" stop-color="#fff"/><stop offset="0.74" stop-color="#fff"/><stop offset="0.9" stop-color="#e2e2e2"/><stop offset="1" stop-color="#a8a8a8"/></radialGradient><linearGradient id="g933b" x1="0" y1="0" x2="0.3" y2="1"><stop offset="0" stop-color="#8e8e8e"/><stop offset="0.5" stop-color="#8a8a8a"/><stop offset="1" stop-color="#828282"/></linearGradient><radialGradient id="g933h" cx="0.4" cy="0.35" r="0.7"><stop offset="0" stop-color="#2c2c2c"/><stop offset="1" stop-color="#000"/></radialGradient></defs><circle cx="933.3" cy="105.5" r="64.3" fill="#8c8c8c"/><circle cx="933.3" cy="105.5" r="62.692499999999995" fill="none" stroke="#b2b2b2" stroke-width="2.25"/><circle cx="933.3" cy="105.5" r="59.799" fill="url(#g933b)"/><circle cx="933.3" cy="105.5" r="56.905499999999996" fill="none" stroke="#9c9c9c" stroke-width="1.93"/><circle cx="933.3" cy="105.5" r="55.8124" fill="#6a6a6a"/><circle cx="933.3" cy="105.5" r="54.78359999999999" fill="url(#g933f)"/><path d="M984.20 103.95 A50.93 50.93 0 0 1 981.54 121.81" stroke="#ffee22" stroke-width="5.47" fill="none"/><path d="M981.54 121.81 A50.93 50.93 0 0 1 969.31 141.51" stroke="#e81010" stroke-width="5.47" fill="none"/><line x1="894.65" y1="144.15" x2="898.06" y2="140.74" stroke="#1a1a1a" stroke-width="1.29"/><line x1="885.10" y1="131.26" x2="887.93" y2="129.75" stroke="#1a1a1a" stroke-width="1.29"/><line x1="879.70" y1="116.16" x2="884.43" y2="115.22" stroke="#1a1a1a" stroke-width="1.29"/><line x1="878.91" y1="100.14" x2="882.11" y2="100.46" stroke="#1a1a1a" stroke-width="1.29"/><line x1="882.81" y1="84.58" x2="887.26" y2="86.43" stroke="#1a1a1a" stroke-width="1.29"/><line x1="891.05" y1="70.83" x2="893.54" y2="72.87" stroke="#1a1a1a" stroke-width="1.29"/><line x1="902.94" y1="60.06" x2="905.61" y2="64.07" stroke="#1a1a1a" stroke-width="1.29"/><line x1="917.43" y1="53.20" x2="918.37" y2="56.27" stroke="#1a1a1a" stroke-width="1.29"/><line x1="933.30" y1="50.85" x2="933.30" y2="55.67" stroke="#1a1a1a" stroke-width="1.29"/><line x1="949.17" y1="53.20" x2="948.23" y2="56.27" stroke="#1a1a1a" stroke-width="1.29"/><line x1="963.66" y1="60.06" x2="960.99" y2="64.07" stroke="#1a1a1a" stroke-width="1.29"/><line x1="975.55" y1="70.83" x2="973.06" y2="72.87" stroke="#1a1a1a" stroke-width="1.29"/><line x1="983.79" y1="84.58" x2="979.34" y2="86.43" stroke="#1a1a1a" stroke-width="1.29"/><line x1="987.69" y1="100.14" x2="984.49" y2="100.46" stroke="#1a1a1a" stroke-width="1.29"/><line x1="986.90" y1="116.16" x2="982.17" y2="115.22" stroke="#1a1a1a" stroke-width="1.29"/><line x1="981.50" y1="131.26" x2="978.67" y2="129.75" stroke="#1a1a1a" stroke-width="1.29"/><line x1="971.95" y1="144.15" x2="968.54" y2="140.74" stroke="#1a1a1a" stroke-width="1.29"/><text x="904.0" y="137.9" font-size="7.3" fill="#111" text-anchor="middle" font-weight="bold" font-family="DejaVu Sans,Liberation Sans,sans-serif" stroke="#111" stroke-width="0.25">-40</text><text x="892.7" y="117.2" font-size="7.3" fill="#111" text-anchor="middle" font-weight="bold" font-family="DejaVu Sans,Liberation Sans,sans-serif" stroke="#111" stroke-width="0.25">-20</text><text x="891.9" y="92.2" font-size="7.3" fill="#111" text-anchor="middle" font-weight="bold" font-family="DejaVu Sans,Liberation Sans,sans-serif" stroke="#111" stroke-width="0.25">0</text><text x="908.8" y="73.2" font-size="7.3" fill="#111" text-anchor="middle" font-weight="bold" font-family="DejaVu Sans,Liberation Sans,sans-serif" stroke="#111" stroke-width="0.25">20</text><text x="933.1" y="66.3" font-size="7.3" fill="#111" text-anchor="middle" font-weight="bold" font-family="DejaVu Sans,Liberation Sans,sans-serif" stroke="#111" stroke-width="0.25">40</text><text x="957.3" y="73.2" font-size="7.3" fill="#111" text-anchor="middle" font-weight="bold" font-family="DejaVu Sans,Liberation Sans,sans-serif" stroke="#111" stroke-width="0.25">60</text><text x="972.5" y="92.5" font-size="7.3" fill="#111" text-anchor="middle" font-weight="bold" font-family="DejaVu Sans,Liberation Sans,sans-serif" stroke="#111" stroke-width="0.25">80</text><text x="973.6" y="117.2" font-size="7.3" fill="#111" text-anchor="middle" font-weight="bold" font-family="DejaVu Sans,Liberation Sans,sans-serif" stroke="#111" stroke-width="0.25">100</text><text x="962.2" y="137.9" font-size="7.3" fill="#111" text-anchor="middle" font-weight="bold" font-family="DejaVu Sans,Liberation Sans,sans-serif" stroke="#111" stroke-width="0.25">120</text><text x="933.3" y="89.301" font-size="6.8" fill="#111" text-anchor="middle" font-weight="bold" font-family="DejaVu Sans Condensed,DejaVu Sans,Liberation Sans,sans-serif" stroke="#111" stroke-width="0.25">Coolant Temp</text><text x="933.3" y="128.7405" font-size="6.935" fill="#111" text-anchor="middle" font-weight="bold" font-family="DejaVu Sans,Liberation Sans,sans-serif">0</text><text x="933.3" y="137.8711" font-size="6.57" fill="#111" text-anchor="middle" font-weight="bold" font-family="DejaVu Sans,Liberation Sans,sans-serif">°C</text><path d="M882.81 84.58 L935.18 104.33 L943.10 109.56 L933.80 107.66 Z" fill="#d64556" stroke="#b82838" stroke-width="0.5" opacity="0.9"/><circle cx="933.3" cy="105.5" r="8.04" fill="url(#g933h)"/><line x1="937.46" y1="107.22" x2="943.10" y2="109.56" stroke="#d64556" stroke-width="1.29" opacity="0.75"/><line x1="926.17" y1="102.55" x2="937.46" y2="107.22" stroke="#555" stroke-width="0.6" opacity="0.7"/></g></svg>
<div class="p" style="left:868.6px;top:171px;width:106.19999999999993px;height:28.3px;background:#eee"></div><div class="t" style="left:868.6px;width:52.799999999999955px;text-align:center;top:178.9px;font-size:12.5px;font-weight:normal;-webkit-text-stroke:0;color:#505050">clt</div><div class="t" style="left:921.4px;width:53.39999999999998px;text-align:center;top:178.9px;font-size:12.5px;font-weight:normal;-webkit-text-stroke:0;color:#505050">%</div><div class="p" style="left:868.6px;top:199.3px;width:52.799999999999955px;height:25.49999999999999px;background:#8484ff;box-shadow:inset 0 -1px 0 rgba(90,110,130,0.28), inset -1px 0 0 rgba(90,110,130,0.25)"></div><div class="p" style="left:921.4px;top:199.3px;width:53.39999999999998px;height:25.49999999999999px;background:#ff8484;box-shadow:inset 0 -1px 0 rgba(90,110,130,0.28)"></div><div class="t" style="left:868.6px;width:52.799999999999955px;text-align:center;top:203.40px;font-size:15.2px;color:#0a0a14">4</div><div class="t" style="left:921.4px;width:53.39999999999998px;text-align:center;top:203.40px;font-size:15.2px;color:#050505">250.0</div><div class="p" style="left:868.6px;top:224.5px;width:52.799999999999955px;height:26.399999999999995px;background:#84c8ac;box-shadow:inset 0 -1px 0 rgba(90,110,130,0.28), inset -1px 0 0 rgba(90,110,130,0.25)"></div><div class="p" style="left:921.4px;top:224.5px;width:53.39999999999998px;height:26.399999999999995px;background:#acc884;box-shadow:inset 0 -1px 0 rgba(90,110,130,0.28)"></div><div class="t" style="left:868.6px;width:52.799999999999955px;text-align:center;top:230.15px;font-size:15.2px;color:#0a0a14">27</div><div class="t" style="left:921.4px;width:53.39999999999998px;text-align:center;top:230.15px;font-size:15.2px;color:#050505">200.0</div><div class="p" style="left:868.6px;top:250.6px;width:52.799999999999955px;height:26.399999999999995px;background:#acc884;box-shadow:inset 0 -1px 0 rgba(90,110,130,0.28), inset -1px 0 0 rgba(90,110,130,0.25)"></div><div class="p" style="left:921.4px;top:250.6px;width:53.39999999999998px;height:26.399999999999995px;background:#84c8ac;box-shadow:inset 0 -1px 0 rgba(90,110,130,0.28)"></div><div class="t" style="left:868.6px;width:52.799999999999955px;text-align:center;top:256.25px;font-size:15.2px;color:#0a0a14">49</div><div class="t" style="left:921.4px;width:53.39999999999998px;text-align:center;top:256.25px;font-size:15.2px;color:#050505">150.0</div><div class="p" style="left:868.6px;top:276.7px;width:52.799999999999955px;height:25.100000000000012px;background:#ff8484;box-shadow:inset 0 -1px 0 rgba(90,110,130,0.28), inset -1px 0 0 rgba(90,110,130,0.25)"></div><div class="p" style="left:921.4px;top:276.7px;width:53.39999999999998px;height:25.100000000000012px;background:#8484ff;box-shadow:inset 0 -1px 0 rgba(90,110,130,0.28)"></div><div class="t" style="left:868.6px;width:52.799999999999955px;text-align:center;top:282.10px;font-size:15.2px;color:#0a0a14">71</div><div class="t" style="left:921.4px;width:53.39999999999998px;text-align:center;top:282.10px;font-size:15.2px;color:#050505">100.0</div>
<div class="p" style="left:974.8px;top:170px;width:18.200000000000045px;height:131.5px;background:#eee"></div>
<svg class="p" style="left:977.6px;top:172px;width:14.2px;height:14.2px;background:linear-gradient(#fff,#dbe6f2);box-shadow:0 0 0 1px #b8cfe5" viewBox="0 0 16 16"><circle cx="8" cy="8" r="6.8" fill="#050505"/><path d="M4.6 6.5h6.8M4.6 9.5h6.8" stroke="#fff" stroke-width="1.6"/></svg>
<svg class="p" style="left:977.6px;top:190.7px;width:14.2px;height:14.2px;background:linear-gradient(#fff,#dbe6f2);box-shadow:0 0 0 1px #b8cfe5" viewBox="0 0 16 16"><rect x="1.5" y="1.5" width="13" height="13" rx="1.5" fill="#050505"/><path d="M8 12V4.5M4.6 7.8L8 4.3l3.4 3.5" stroke="#fff" stroke-width="1.7" fill="none"/></svg>
<svg class="p" style="left:977.6px;top:209.6px;width:14.2px;height:14.2px;background:linear-gradient(#fff,#dbe6f2);box-shadow:0 0 0 1px #b8cfe5" viewBox="0 0 16 16"><rect x="1.5" y="1.5" width="13" height="13" rx="1.5" fill="#050505"/><path d="M8 4v7.5M4.6 8.2L8 11.7l3.4-3.5" stroke="#fff" stroke-width="1.7" fill="none"/></svg>
<svg class="p" style="left:977.6px;top:228.6px;width:14.2px;height:14.2px;background:linear-gradient(#fff,#dbe6f2);box-shadow:0 0 0 1px #b8cfe5" viewBox="0 0 16 16"><circle cx="8" cy="8" r="6.8" fill="#050505"/><path d="M4.2 8h7.6" stroke="#fff" stroke-width="2"/></svg>
<svg class="p" style="left:977.6px;top:247.3px;width:14.2px;height:14.2px;background:linear-gradient(#fff,#dbe6f2);box-shadow:0 0 0 1px #b8cfe5" viewBox="0 0 16 16"><circle cx="8" cy="8" r="6.8" fill="#050505"/><path d="M4.2 8h7.6M8 4.2v7.6" stroke="#fff" stroke-width="2"/></svg>
<svg class="p" style="left:977.6px;top:266.4px;width:14.2px;height:14.2px;background:linear-gradient(#fff,#dbe6f2);box-shadow:0 0 0 1px #b8cfe5" viewBox="0 0 16 16"><circle cx="8" cy="8" r="6.8" fill="#050505"/><path d="M5.2 5.2l5.6 5.6M10.8 5.2l-5.6 5.6" stroke="#fff" stroke-width="1.9"/></svg>
<svg class="p" style="left:977.6px;top:285.3px;width:14.2px;height:14.2px;background:linear-gradient(#fff,#dbe6f2);box-shadow:0 0 0 1px #b8cfe5" viewBox="0 0 16 16"><path d="M4.5 12L8 8.3" stroke="#e01020" stroke-width="2.4" stroke-linecap="round"/><path d="M8 8.3L12 4" stroke="#2030e0" stroke-width="2.4" stroke-linecap="round"/></svg>
<div class="p" style="left:465px;top:318.6px;width:532.8px;height:418.4px;background:#000"></div>
<svg class="p" style="left:465px;top:318px;width:533px;height:419px" viewBox="465 318 533 419" font-family="Liberation Sans,sans-serif"><g transform="translate(0,0)"><line x1="498.5" y1="334.5" x2="498.5" y2="716.5" stroke="#a0a0a0" stroke-width="1"/><line x1="578.5" y1="334.5" x2="578.5" y2="716.5" stroke="#a0a0a0" stroke-width="1"/><line x1="657.5" y1="334.5" x2="657.5" y2="716.5" stroke="#a0a0a0" stroke-width="1"/><line x1="736.5" y1="334.5" x2="736.5" y2="716.5" stroke="#a0a0a0" stroke-width="1"/><line x1="816.5" y1="334.5" x2="816.5" y2="716.5" stroke="#a0a0a0" stroke-width="1"/><line x1="895.5" y1="334.5" x2="895.5" y2="716.5" stroke="#a0a0a0" stroke-width="1"/><line x1="498.5" y1="334.5" x2="895.5" y2="334.5" stroke="#b0b0b0" stroke-width="1"/><line x1="498.5" y1="410.5" x2="895.5" y2="410.5" stroke="#b0b0b0" stroke-width="1"/><line x1="498.5" y1="487.5" x2="895.5" y2="487.5" stroke="#b0b0b0" stroke-width="1"/><line x1="498.5" y1="563.5" x2="895.5" y2="563.5" stroke="#b0b0b0" stroke-width="1"/><line x1="498.5" y1="640.5" x2="895.5" y2="640.5" stroke="#b0b0b0" stroke-width="1"/><line x1="498.5" y1="716.5" x2="895.5" y2="716.5" stroke="#b0b0b0" stroke-width="1"/><text transform="translate(498.2,341.09999999999997) scale(0.86,1)" font-size="8.2" fill="#d0d0d0" text-anchor="end" font-weight="normal" >100.0</text><text transform="translate(498.2,414.38) scale(0.86,1)" font-size="8.2" fill="#d0d0d0" text-anchor="end" font-weight="normal" >80.0</text><text transform="translate(498.2,490.85999999999996) scale(0.86,1)" font-size="8.2" fill="#d0d0d0" text-anchor="end" font-weight="normal" >60.0</text><text transform="translate(498.2,567.3399999999999) scale(0.86,1)" font-size="8.2" fill="#d0d0d0" text-anchor="end" font-weight="normal" >40.0</text><text transform="translate(498.2,643.8199999999999) scale(0.86,1)" font-size="8.2" fill="#d0d0d0" text-anchor="end" font-weight="normal" >20.0</text><text transform="translate(498.2,716.9) scale(0.86,1)" font-size="8.2" fill="#d0d0d0" text-anchor="end" font-weight="normal" >0.0</text><text transform="translate(501.7,726.7) scale(0.86,1)" font-size="8.2" fill="#d0d0d0" text-anchor="middle" font-weight="normal" >0</text><text transform="translate(577.7,726.7) scale(0.86,1)" font-size="8.2" fill="#d0d0d0" text-anchor="middle" font-weight="normal" >1800</text><text transform="translate(657.1,726.7) scale(0.86,1)" font-size="8.2" fill="#d0d0d0" text-anchor="middle" font-weight="normal" >3600</text><text transform="translate(736.5,726.7) scale(0.86,1)" font-size="8.2" fill="#d0d0d0" text-anchor="middle" font-weight="normal" >5400</text><text transform="translate(815.9,726.7) scale(0.86,1)" font-size="8.2" fill="#d0d0d0" text-anchor="middle" font-weight="normal" >7200</text><text transform="translate(892.5,726.7) scale(0.86,1)" font-size="8.2" fill="#d0d0d0" text-anchor="middle" font-weight="normal" >9000</text><text x="697" y="736" font-size="8.2" fill="#eee" text-anchor="middle" font-weight="bold" >RPM (rpm)</text><text x="473.5" y="513" font-size="7" fill="#ddd" text-anchor="middle" font-weight="bold" >%</text><text x="473.5" y="529" font-size="7" fill="#ddd" text-anchor="middle" font-weight="bold" >%</text><text x="685" y="328.4" font-size="8.3" fill="#f4f4f4" text-anchor="middle" font-weight="bold" >Knock Input Threshold</text><rect x="467.4" y="321.6" width="9.8" height="9.6" fill="#e4ecf4" stroke="#b8cfe5" stroke-width="0.8"/><rect x="468.2" y="322.40000000000003" width="8.200000000000001" height="4.32" fill="#fff" opacity="0.8"/><rect x="469.556" y="328.12800000000004" width="1.176" height="1.176" fill="#555"/><rect x="471.712" y="328.12800000000004" width="1.176" height="1.176" fill="#555"/><rect x="473.868" y="328.12800000000004" width="1.176" height="1.176" fill="#555"/><rect x="893.9" y="321.6" width="9.8" height="9.6" fill="#e4ecf4" stroke="#b8cfe5" stroke-width="0.8"/><rect x="894.6999999999999" y="322.40000000000003" width="8.200000000000001" height="4.32" fill="#fff" opacity="0.8"/><rect x="896.0559999999999" y="328.12800000000004" width="1.176" height="1.176" fill="#555"/><rect x="898.2119999999999" y="328.12800000000004" width="1.176" height="1.176" fill="#555"/><rect x="900.3679999999999" y="328.12800000000004" width="1.176" height="1.176" fill="#555"/><g transform="translate(479,322.3) scale(0.65)"><path d="M0.3 6.4 C0.3 3.4 3.2 1.7 6.8 1.7 C10.4 1.7 13.3 3.4 13.3 6.4 C13.3 8.6 12 10 10.6 10.7 L11.6 12.6 L8.2 11.2 C7.7 11.3 7.2 11.3 6.8 11.3 C3.2 11.3 0.3 9.4 0.3 6.4Z" fill="#c6e2ec" stroke="#a6cedc" stroke-width="0.6"/><ellipse cx="5.2" cy="5.4" rx="4.2" ry="2.7" fill="#f2fafc"/><path d="M6.9 8.3 L7.6 5.9 L11.5 1.5 L13.3 3.1 L9.4 7.5 Z" fill="#e9b256"/><path d="M11.5 1.5 L12.6 0.2 L14.4 1.8 L13.3 3.1 Z" fill="#c8607c"/><path d="M6.9 8.3 L7.2 7.3 L7.9 7.9 Z" fill="#777"/><rect x="15.7" y="0.5" width="12.6" height="12.6" rx="3.4" fill="#d4eefc"/><rect x="16.1" y="0.9" width="11.8" height="11.8" rx="3" fill="#0452b2"/><text x="22" y="11.3" font-family="Liberation Sans,sans-serif" font-weight="bold" font-size="12.6" fill="#d8f6ff" stroke="#d8f6ff" stroke-width="0.3" text-anchor="middle">?</text></g><line x1="498.7" y1="525.4" x2="807.5" y2="525.4" stroke="#ffff00" stroke-width="2"/><circle cx="498.7" cy="525.4" r="2.9" fill="#3030ff"/><circle cx="542.8" cy="525.4" r="2.9" fill="#3030ff"/><circle cx="564.9" cy="525.4" r="2.9" fill="#3030ff"/><circle cx="586.9" cy="525.4" r="2.9" fill="#3030ff"/><circle cx="609.0" cy="525.4" r="2.9" fill="#3030ff"/><circle cx="631.0" cy="525.4" r="2.9" fill="#3030ff"/><circle cx="675.1" cy="525.4" r="2.9" fill="#3030ff"/><circle cx="719.3" cy="525.4" r="2.9" fill="#3030ff"/><circle cx="763.4" cy="525.4" r="2.9" fill="#3030ff"/><circle cx="807.5" cy="525.4" r="2.9" fill="#3030ff"/><defs><radialGradient id="g961f" cx="0.5" cy="0.47" r="0.53"><stop offset="0" stop-color="#fff"/><stop offset="0.74" stop-color="#fff"/><stop offset="0.9" stop-color="#e2e2e2"/><stop offset="1" stop-color="#a8a8a8"/></radialGradient><linearGradient id="g961b" x1="0" y1="0" x2="0.3" y2="1"><stop offset="0" stop-color="#8e8e8e"/><stop offset="0.5" stop-color="#8a8a8a"/><stop offset="1" stop-color="#828282"/></linearGradient><radialGradient id="g961h" cx="0.4" cy="0.35" r="0.7"><stop offset="0" stop-color="#2c2c2c"/><stop offset="1" stop-color="#000"/></radialGradient></defs><circle cx="961.8" cy="373.9" r="53.8" fill="#8c8c8c"/><circle cx="961.8" cy="373.9" r="52.455" fill="none" stroke="#b2b2b2" stroke-width="1.88"/><circle cx="961.8" cy="373.9" r="50.034" fill="url(#g961b)"/><circle cx="961.8" cy="373.9" r="47.613" fill="none" stroke="#9c9c9c" stroke-width="1.61"/><circle cx="961.8" cy="373.9" r="46.6984" fill="#6a6a6a"/><circle cx="961.8" cy="373.9" r="45.837599999999995" fill="url(#g961f)"/><line x1="929.46" y1="406.24" x2="932.32" y2="403.38" stroke="#1a1a1a" stroke-width="1.08"/><line x1="922.81" y1="397.79" x2="925.10" y2="396.39" stroke="#1a1a1a" stroke-width="1.08"/><line x1="918.31" y1="388.03" x2="922.15" y2="386.78" stroke="#1a1a1a" stroke-width="1.08"/><line x1="916.21" y1="377.49" x2="918.89" y2="377.28" stroke="#1a1a1a" stroke-width="1.08"/><line x1="916.63" y1="366.75" x2="920.62" y2="367.38" stroke="#1a1a1a" stroke-width="1.08"/><line x1="919.55" y1="356.40" x2="922.04" y2="357.43" stroke="#1a1a1a" stroke-width="1.08"/><line x1="924.80" y1="347.02" x2="928.07" y2="349.39" stroke="#1a1a1a" stroke-width="1.08"/><line x1="932.10" y1="339.13" x2="933.85" y2="341.17" stroke="#1a1a1a" stroke-width="1.08"/><line x1="941.04" y1="333.15" x2="942.87" y2="336.75" stroke="#1a1a1a" stroke-width="1.08"/><line x1="951.12" y1="329.43" x2="951.75" y2="332.05" stroke="#1a1a1a" stroke-width="1.08"/><line x1="961.80" y1="328.17" x2="961.80" y2="332.20" stroke="#1a1a1a" stroke-width="1.08"/><line x1="972.48" y1="329.43" x2="971.85" y2="332.05" stroke="#1a1a1a" stroke-width="1.08"/><line x1="982.56" y1="333.15" x2="980.73" y2="336.75" stroke="#1a1a1a" stroke-width="1.08"/><line x1="991.50" y1="339.13" x2="989.75" y2="341.17" stroke="#1a1a1a" stroke-width="1.08"/><line x1="998.80" y1="347.02" x2="995.53" y2="349.39" stroke="#1a1a1a" stroke-width="1.08"/><line x1="1004.05" y1="356.40" x2="1001.56" y2="357.43" stroke="#1a1a1a" stroke-width="1.08"/><line x1="1006.97" y1="366.75" x2="1002.98" y2="367.38" stroke="#1a1a1a" stroke-width="1.08"/><line x1="1007.39" y1="377.49" x2="1004.71" y2="377.28" stroke="#1a1a1a" stroke-width="1.08"/><line x1="1005.29" y1="388.03" x2="1001.45" y2="386.78" stroke="#1a1a1a" stroke-width="1.08"/><line x1="1000.79" y1="397.79" x2="998.50" y2="396.39" stroke="#1a1a1a" stroke-width="1.08"/><line x1="994.14" y1="406.24" x2="991.28" y2="403.38" stroke="#1a1a1a" stroke-width="1.08"/><text x="934.8" y="402.7" font-size="6.1" fill="#111" text-anchor="middle" font-weight="bold" font-family="DejaVu Sans,Liberation Sans,sans-serif" stroke="#111" stroke-width="0.25">0</text><text x="927.0" y="387.6" font-size="6.1" fill="#111" text-anchor="middle" font-weight="bold" font-family="DejaVu Sans,Liberation Sans,sans-serif" stroke="#111" stroke-width="0.25">10</text><text x="926.0" y="371.1" font-size="6.1" fill="#111" text-anchor="middle" font-weight="bold" font-family="DejaVu Sans,Liberation Sans,sans-serif" stroke="#111" stroke-width="0.25">20</text><text x="932.2" y="355.5" font-size="6.1" fill="#111" text-anchor="middle" font-weight="bold" font-family="DejaVu Sans,Liberation Sans,sans-serif" stroke="#111" stroke-width="0.25">30</text><text x="945.3" y="344.5" font-size="6.1" fill="#111" text-anchor="middle" font-weight="bold" font-family="DejaVu Sans,Liberation Sans,sans-serif" stroke="#111" stroke-width="0.25">40</text><text x="961.8" y="340.7" font-size="6.1" fill="#111" text-anchor="middle" font-weight="bold" font-family="DejaVu Sans,Liberation Sans,sans-serif" stroke="#111" stroke-width="0.25">50</text><text x="978.1" y="344.5" font-size="6.1" fill="#111" text-anchor="middle" font-weight="bold" font-family="DejaVu Sans,Liberation Sans,sans-serif" stroke="#111" stroke-width="0.25">60</text><text x="991.3" y="355.5" font-size="6.1" fill="#111" text-anchor="middle" font-weight="bold" font-family="DejaVu Sans,Liberation Sans,sans-serif" stroke="#111" stroke-width="0.25">70</text><text x="997.7" y="371.1" font-size="6.1" fill="#111" text-anchor="middle" font-weight="bold" font-family="DejaVu Sans,Liberation Sans,sans-serif" stroke="#111" stroke-width="0.25">80</text><text x="996.5" y="387.6" font-size="6.1" fill="#111" text-anchor="middle" font-weight="bold" font-family="DejaVu Sans,Liberation Sans,sans-serif" stroke="#111" stroke-width="0.25">90</text><text x="986.4" y="401.0" font-size="6.1" fill="#111" text-anchor="middle" font-weight="bold" font-family="DejaVu Sans,Liberation Sans,sans-serif" stroke="#111" stroke-width="0.25">100</text><text x="961.8" y="360.314" font-size="5.6" fill="#111" text-anchor="middle" font-weight="bold" font-family="DejaVu Sans Condensed,DejaVu Sans,Liberation Sans,sans-serif" stroke="#111" stroke-width="0.25">Knock Input</text><text x="961.8" y="393.3425" font-size="5.794999999999999" fill="#111" text-anchor="middle" font-weight="bold" font-family="DejaVu Sans,Liberation Sans,sans-serif">0.0</text><text x="961.8" y="400.98209999999995" font-size="5.49" fill="#111" text-anchor="middle" font-weight="bold" font-family="DejaVu Sans,Liberation Sans,sans-serif">%</text><path d="M929.46 406.24 L961.50 372.07 L968.08 367.62 L963.63 374.20 Z" fill="#d64556" stroke="#b82838" stroke-width="0.5" opacity="0.9"/><circle cx="961.8" cy="373.9" r="6.72" fill="url(#g961h)"/><line x1="964.46" y1="371.24" x2="968.08" y2="367.62" stroke="#d64556" stroke-width="1.08" opacity="0.75"/><line x1="957.23" y1="378.47" x2="964.46" y2="371.24" stroke="#555" stroke-width="0.6" opacity="0.7"/></g></svg>
<div class="p" style="left:907.3px;top:428.6px;width:90.5px;height:32.4px;background:#eee"></div><div class="t" style="left:907.3px;width:44.700000000000045px;text-align:center;top:438.05px;font-size:13.5px;font-weight:bold;color:#333">RPM</div><div class="t" style="left:952px;width:45.799999999999955px;text-align:center;top:438.05px;font-size:13.5px;font-weight:bold;color:#333">%</div><div class="p" style="left:907.3px;top:461.0px;width:44.700000000000045px;height:28.23px;background:#8888ff;box-shadow:inset 0 -1px 0 rgba(90,110,130,0.28), inset -1px 0 0 rgba(90,110,130,0.25)"></div><div class="p" style="left:952px;top:461.0px;width:45.799999999999955px;height:28.23px;background:#8a8aff;box-shadow:inset 0 -1px 0 rgba(90,110,130,0.28)"></div><div class="t" style="left:907.3px;width:44.700000000000045px;text-align:center;top:469.46px;font-size:12.8px;color:#7a0030">0</div><div class="t" style="left:951.1px;width:45.799999999999955px;text-align:center;top:469.46px;font-size:12.8px;color:#0a0a3a">50.0</div><div class="p" style="left:907.3px;top:488.93px;width:44.700000000000045px;height:28.23px;background:#88a5dd;box-shadow:inset 0 -1px 0 rgba(90,110,130,0.28), inset -1px 0 0 rgba(90,110,130,0.25)"></div><div class="p" style="left:952px;top:488.93px;width:45.799999999999955px;height:28.23px;background:#8a8aff;box-shadow:inset 0 -1px 0 rgba(90,110,130,0.28)"></div><div class="t" style="left:907.3px;width:44.700000000000045px;text-align:center;top:497.39px;font-size:12.8px;color:#0a0a14">1000</div><div class="t" style="left:951.1px;width:45.799999999999955px;text-align:center;top:497.39px;font-size:12.8px;color:#0a0a3a">50.0</div><div class="p" style="left:907.3px;top:516.86px;width:44.700000000000045px;height:28.23px;background:#88b3cc;box-shadow:inset 0 -1px 0 rgba(90,110,130,0.28), inset -1px 0 0 rgba(90,110,130,0.25)"></div><div class="p" style="left:952px;top:516.86px;width:45.799999999999955px;height:28.23px;background:#8a8aff;box-shadow:inset 0 -1px 0 rgba(90,110,130,0.28)"></div><div class="t" style="left:907.3px;width:44.700000000000045px;text-align:center;top:525.33px;font-size:12.8px;color:#0a0a14">1500</div><div class="t" style="left:951.1px;width:45.799999999999955px;text-align:center;top:525.33px;font-size:12.8px;color:#0a0a3a">50.0</div><div class="p" style="left:907.3px;top:544.79px;width:44.700000000000045px;height:28.23px;background:#88c1bb;box-shadow:inset 0 -1px 0 rgba(90,110,130,0.28), inset -1px 0 0 rgba(90,110,130,0.25)"></div><div class="p" style="left:952px;top:544.79px;width:45.799999999999955px;height:28.23px;background:#8a8aff;box-shadow:inset 0 -1px 0 rgba(90,110,130,0.28)"></div><div class="t" style="left:907.3px;width:44.700000000000045px;text-align:center;top:553.25px;font-size:12.8px;color:#0a0a14">2000</div><div class="t" style="left:951.1px;width:45.799999999999955px;text-align:center;top:553.25px;font-size:12.8px;color:#0a0a3a">50.0</div><div class="p" style="left:907.3px;top:572.7199999999999px;width:44.700000000000045px;height:28.23px;background:#88cfaa;box-shadow:inset 0 -1px 0 rgba(90,110,130,0.28), inset -1px 0 0 rgba(90,110,130,0.25)"></div><div class="p" style="left:952px;top:572.7199999999999px;width:45.799999999999955px;height:28.23px;background:#8a8aff;box-shadow:inset 0 -1px 0 rgba(90,110,130,0.28)"></div><div class="t" style="left:907.3px;width:44.700000000000045px;text-align:center;top:581.18px;font-size:12.8px;color:#0a0a14">2500</div><div class="t" style="left:951.1px;width:45.799999999999955px;text-align:center;top:581.18px;font-size:12.8px;color:#0a0a3a">50.0</div><div class="p" style="left:907.3px;top:600.6499999999999px;width:44.700000000000045px;height:28.23px;background:#88de99;box-shadow:inset 0 -1px 0 rgba(90,110,130,0.28), inset -1px 0 0 rgba(90,110,130,0.25)"></div><div class="p" style="left:952px;top:600.6499999999999px;width:45.799999999999955px;height:28.23px;background:#8a8aff;box-shadow:inset 0 -1px 0 rgba(90,110,130,0.28)"></div><div class="t" style="left:907.3px;width:44.700000000000045px;text-align:center;top:609.11px;font-size:12.8px;color:#0a0a14">3000</div><div class="t" style="left:951.1px;width:45.799999999999955px;text-align:center;top:609.11px;font-size:12.8px;color:#0a0a3a">50.0</div><div class="p" style="left:907.3px;top:628.5799999999998px;width:44.700000000000045px;height:28.23px;background:#99de88;box-shadow:inset 0 -1px 0 rgba(90,110,130,0.28), inset -1px 0 0 rgba(90,110,130,0.25)"></div><div class="p" style="left:952px;top:628.5799999999998px;width:45.799999999999955px;height:28.23px;background:#8a8aff;box-shadow:inset 0 -1px 0 rgba(90,110,130,0.28)"></div><div class="t" style="left:907.3px;width:44.700000000000045px;text-align:center;top:637.04px;font-size:12.8px;color:#0a0a14">4000</div><div class="t" style="left:951.1px;width:45.799999999999955px;text-align:center;top:637.04px;font-size:12.8px;color:#0a0a3a">50.0</div><div class="p" style="left:907.3px;top:656.5099999999998px;width:44.700000000000045px;height:28.23px;background:#bbc188;box-shadow:inset 0 -1px 0 rgba(90,110,130,0.28), inset -1px 0 0 rgba(90,110,130,0.25)"></div><div class="p" style="left:952px;top:656.5099999999998px;width:45.799999999999955px;height:28.23px;background:#8a8aff;box-shadow:inset 0 -1px 0 rgba(90,110,130,0.28)"></div><div class="t" style="left:907.3px;width:44.700000000000045px;text-align:center;top:664.97px;font-size:12.8px;color:#0a0a14">5000</div><div class="t" style="left:951.1px;width:45.799999999999955px;text-align:center;top:664.97px;font-size:12.8px;color:#0a0a3a">50.0</div><div class="p" style="left:907.3px;top:684.4399999999997px;width:44.700000000000045px;height:28.23px;background:#dda588;box-shadow:inset 0 -1px 0 rgba(90,110,130,0.28), inset -1px 0 0 rgba(90,110,130,0.25)"></div><div class="p" style="left:952px;top:684.4399999999997px;width:45.799999999999955px;height:28.23px;background:#8a8aff;box-shadow:inset 0 -1px 0 rgba(90,110,130,0.28)"></div><div class="t" style="left:907.3px;width:44.700000000000045px;text-align:center;top:692.90px;font-size:12.8px;color:#0a0a14">6000</div><div class="t" style="left:951.1px;width:45.799999999999955px;text-align:center;top:692.90px;font-size:12.8px;color:#0a0a3a">50.0</div><div class="p" style="left:907.3px;top:712.3699999999997px;width:44.700000000000045px;height:28.23px;background:#ff8888;box-shadow:inset 0 -1px 0 rgba(90,110,130,0.28), inset -1px 0 0 rgba(90,110,130,0.25)"></div><div class="p" style="left:952px;top:712.3699999999997px;width:45.799999999999955px;height:28.23px;background:#8a8aff;box-shadow:inset 0 -1px 0 rgba(90,110,130,0.28)"></div><div class="t" style="left:907.3px;width:44.700000000000045px;text-align:center;top:720.83px;font-size:12.8px;color:#0a0a14">7000</div><div class="t" style="left:951.1px;width:45.799999999999955px;text-align:center;top:720.83px;font-size:12.8px;color:#0a0a3a">50.0</div>
<div class="p" style="left:14px;top:523px;width:351px;height:214px;background:#000"></div>
<svg class="p" style="left:14px;top:523px;width:351px;height:214px" viewBox="14 523 351 214" font-family="Liberation Sans,sans-serif"><g transform="translate(0,0)"><line x1="36.5" y1="523" x2="36.5" y2="720.5" stroke="#a0a0a0" stroke-width="1"/><line x1="99.5" y1="523" x2="99.5" y2="720.5" stroke="#a0a0a0" stroke-width="1"/><line x1="163.5" y1="523" x2="163.5" y2="720.5" stroke="#a0a0a0" stroke-width="1"/><line x1="227.5" y1="523" x2="227.5" y2="720.5" stroke="#a0a0a0" stroke-width="1"/><line x1="291.5" y1="523" x2="291.5" y2="720.5" stroke="#a0a0a0" stroke-width="1"/><line x1="355.5" y1="523" x2="355.5" y2="720.5" stroke="#a0a0a0" stroke-width="1"/><line x1="36.5" y1="538.5" x2="355.5" y2="538.5" stroke="#b0b0b0" stroke-width="1"/><line x1="36.5" y1="599.5" x2="355.5" y2="599.5" stroke="#b0b0b0" stroke-width="1"/><line x1="36.5" y1="659.5" x2="355.5" y2="659.5" stroke="#b0b0b0" stroke-width="1"/><line x1="36.5" y1="720.5" x2="355.5" y2="720.5" stroke="#b0b0b0" stroke-width="1"/><text transform="translate(35.6,541.5999999999999) scale(0.88,1)" font-size="6.6" fill="#d0d0d0" text-anchor="end" font-weight="normal" >60.0</text><text transform="translate(35.6,602.2499999999999) scale(0.88,1)" font-size="6.6" fill="#d0d0d0" text-anchor="end" font-weight="normal" >40.0</text><text transform="translate(35.6,662.8999999999999) scale(0.88,1)" font-size="6.6" fill="#d0d0d0" text-anchor="end" font-weight="normal" >20.0</text><text transform="translate(35.6,720.5499999999998) scale(0.88,1)" font-size="6.6" fill="#d0d0d0" text-anchor="end" font-weight="normal" >0.0</text><text transform="translate(38.9,728.7) scale(0.88,1)" font-size="6.6" fill="#d0d0d0" text-anchor="middle" font-weight="normal" >0</text><text transform="translate(99.1,728.7) scale(0.88,1)" font-size="6.6" fill="#d0d0d0" text-anchor="middle" font-weight="normal" >1800</text><text transform="translate(163.0,728.7) scale(0.88,1)" font-size="6.6" fill="#d0d0d0" text-anchor="middle" font-weight="normal" >3600</text><text transform="translate(227.0,728.7) scale(0.88,1)" font-size="6.6" fill="#d0d0d0" text-anchor="middle" font-weight="normal" >5400</text><text transform="translate(291.0,728.7) scale(0.88,1)" font-size="6.6" fill="#d0d0d0" text-anchor="middle" font-weight="normal" >7200</text><text transform="translate(353.90000000000003,728.7) scale(0.88,1)" font-size="6.6" fill="#d0d0d0" text-anchor="middle" font-weight="normal" >9000</text><text x="195.5" y="735.8" font-size="6.6" fill="#eee" text-anchor="middle" font-weight="bold" >RPM (rpm)</text><text x="15.3" y="558.2" font-size="5.6" fill="#ddd" text-anchor="middle" font-weight="bold" >%</text><text x="15.3" y="572.2" font-size="5.6" fill="#ddd" text-anchor="middle" font-weight="bold" >%</text><line x1="35.6" y1="569.2" x2="284.1" y2="569.2" stroke="#ffff00" stroke-width="1.7"/><circle cx="36.0" cy="569.2" r="3" fill="#ff1010"/><circle cx="71.1" cy="569.2" r="2.4" fill="#3030ff"/><circle cx="88.8" cy="569.2" r="2.4" fill="#3030ff"/><circle cx="106.6" cy="569.2" r="2.4" fill="#3030ff"/><circle cx="124.3" cy="569.2" r="2.4" fill="#3030ff"/><circle cx="142.1" cy="569.2" r="2.4" fill="#3030ff"/><circle cx="177.6" cy="569.2" r="2.4" fill="#3030ff"/><circle cx="213.1" cy="569.2" r="2.4" fill="#3030ff"/><circle cx="248.6" cy="569.2" r="2.4" fill="#3030ff"/><circle cx="284.1" cy="569.2" r="2.4" fill="#3030ff"/></g></svg>
<div class="p" style="left:438.6px;top:523px;width:2.2px;height:214px;background:#e4e6f4"></div>
<div class="p" style="left:364.9px;top:518.1px;width:37.0px;height:22.45px;background:#8888ff;box-shadow:inset 0 -1px 0 rgba(90,110,130,0.28), inset -1px 0 0 rgba(90,110,130,0.25)"></div><div class="p" style="left:401.9px;top:518.1px;width:36.700000000000045px;height:22.45px;background:#c2d6ea;box-shadow:inset 0 -1px 0 rgba(90,110,130,0.28)"></div><div class="t" style="left:364.9px;width:37.0px;text-align:center;top:524.43px;font-size:10.5px;color:#7a0030">0</div><div class="t" style="left:401.9px;width:36.700000000000045px;text-align:center;top:524.43px;font-size:10.5px;color:#333">50.0</div><div class="p" style="left:364.9px;top:540.25px;width:37.0px;height:22.45px;background:#88a5dd;box-shadow:inset 0 -1px 0 rgba(90,110,130,0.28), inset -1px 0 0 rgba(90,110,130,0.25)"></div><div class="p" style="left:401.9px;top:540.25px;width:36.700000000000045px;height:22.45px;background:#8a8aff;box-shadow:inset 0 -1px 0 rgba(90,110,130,0.28)"></div><div class="t" style="left:364.9px;width:37.0px;text-align:center;top:546.58px;font-size:10.5px;color:#0a0a14">1000</div><div class="t" style="left:401.9px;width:36.700000000000045px;text-align:center;top:546.58px;font-size:10.5px;color:#0a0a3a">50.0</div><div class="p" style="left:364.9px;top:562.4px;width:37.0px;height:22.45px;background:#88b3cc;box-shadow:inset 0 -1px 0 rgba(90,110,130,0.28), inset -1px 0 0 rgba(90,110,130,0.25)"></div><div class="p" style="left:401.9px;top:562.4px;width:36.700000000000045px;height:22.45px;background:#8a8aff;box-shadow:inset 0 -1px 0 rgba(90,110,130,0.28)"></div><div class="t" style="left:364.9px;width:37.0px;text-align:center;top:568.73px;font-size:10.5px;color:#0a0a14">1500</div><div class="t" style="left:401.9px;width:36.700000000000045px;text-align:center;top:568.73px;font-size:10.5px;color:#0a0a3a">50.0</div><div class="p" style="left:364.9px;top:584.55px;width:37.0px;height:22.45px;background:#88c1bb;box-shadow:inset 0 -1px 0 rgba(90,110,130,0.28), inset -1px 0 0 rgba(90,110,130,0.25)"></div><div class="p" style="left:401.9px;top:584.55px;width:36.700000000000045px;height:22.45px;background:#8a8aff;box-shadow:inset 0 -1px 0 rgba(90,110,130,0.28)"></div><div class="t" style="left:364.9px;width:37.0px;text-align:center;top:590.88px;font-size:10.5px;color:#0a0a14">2000</div><div class="t" style="left:401.9px;width:36.700000000000045px;text-align:center;top:590.88px;font-size:10.5px;color:#0a0a3a">50.0</div><div class="p" style="left:364.9px;top:606.6999999999999px;width:37.0px;height:22.45px;background:#88cfaa;box-shadow:inset 0 -1px 0 rgba(90,110,130,0.28), inset -1px 0 0 rgba(90,110,130,0.25)"></div><div class="p" style="left:401.9px;top:606.6999999999999px;width:36.700000000000045px;height:22.45px;background:#8a8aff;box-shadow:inset 0 -1px 0 rgba(90,110,130,0.28)"></div><div class="t" style="left:364.9px;width:37.0px;text-align:center;top:613.02px;font-size:10.5px;color:#0a0a14">2500</div><div class="t" style="left:401.9px;width:36.700000000000045px;text-align:center;top:613.02px;font-size:10.5px;color:#0a0a3a">50.0</div><div class="p" style="left:364.9px;top:628.8499999999999px;width:37.0px;height:22.45px;background:#88de99;box-shadow:inset 0 -1px 0 rgba(90,110,130,0.28), inset -1px 0 0 rgba(90,110,130,0.25)"></div><div class="p" style="left:401.9px;top:628.8499999999999px;width:36.700000000000045px;height:22.45px;background:#8a8aff;box-shadow:inset 0 -1px 0 rgba(90,110,130,0.28)"></div><div class="t" style="left:364.9px;width:37.0px;text-align:center;top:635.17px;font-size:10.5px;color:#0a0a14">3000</div><div class="t" style="left:401.9px;width:36.700000000000045px;text-align:center;top:635.17px;font-size:10.5px;color:#0a0a3a">50.0</div><div class="p" style="left:364.9px;top:650.9999999999999px;width:37.0px;height:22.45px;background:#99de88;box-shadow:inset 0 -1px 0 rgba(90,110,130,0.28), inset -1px 0 0 rgba(90,110,130,0.25)"></div><div class="p" style="left:401.9px;top:650.9999999999999px;width:36.700000000000045px;height:22.45px;background:#8a8aff;box-shadow:inset 0 -1px 0 rgba(90,110,130,0.28)"></div><div class="t" style="left:364.9px;width:37.0px;text-align:center;top:657.32px;font-size:10.5px;color:#0a0a14">4000</div><div class="t" style="left:401.9px;width:36.700000000000045px;text-align:center;top:657.32px;font-size:10.5px;color:#0a0a3a">50.0</div><div class="p" style="left:364.9px;top:673.1499999999999px;width:37.0px;height:22.45px;background:#bbc188;box-shadow:inset 0 -1px 0 rgba(90,110,130,0.28), inset -1px 0 0 rgba(90,110,130,0.25)"></div><div class="p" style="left:401.9px;top:673.1499999999999px;width:36.700000000000045px;height:22.45px;background:#8a8aff;box-shadow:inset 0 -1px 0 rgba(90,110,130,0.28)"></div><div class="t" style="left:364.9px;width:37.0px;text-align:center;top:679.47px;font-size:10.5px;color:#0a0a14">5000</div><div class="t" style="left:401.9px;width:36.700000000000045px;text-align:center;top:679.47px;font-size:10.5px;color:#0a0a3a">50.0</div><div class="p" style="left:364.9px;top:695.2999999999998px;width:37.0px;height:22.45px;background:#dda588;box-shadow:inset 0 -1px 0 rgba(90,110,130,0.28), inset -1px 0 0 rgba(90,110,130,0.25)"></div><div class="p" style="left:401.9px;top:695.2999999999998px;width:36.700000000000045px;height:22.45px;background:#8a8aff;box-shadow:inset 0 -1px 0 rgba(90,110,130,0.28)"></div><div class="t" style="left:364.9px;width:37.0px;text-align:center;top:701.62px;font-size:10.5px;color:#0a0a14">6000</div><div class="t" style="left:401.9px;width:36.700000000000045px;text-align:center;top:701.62px;font-size:10.5px;color:#0a0a3a">50.0</div><div class="p" style="left:364.9px;top:717.4499999999998px;width:37.0px;height:22.45px;background:#ff8888;box-shadow:inset 0 -1px 0 rgba(90,110,130,0.28), inset -1px 0 0 rgba(90,110,130,0.25)"></div><div class="p" style="left:401.9px;top:717.4499999999998px;width:36.700000000000045px;height:22.45px;background:#8a8aff;box-shadow:inset 0 -1px 0 rgba(90,110,130,0.28)"></div><div class="t" style="left:364.9px;width:37.0px;text-align:center;top:723.77px;font-size:10.5px;color:#0a0a14">7000</div><div class="t" style="left:401.9px;width:36.700000000000045px;text-align:center;top:723.77px;font-size:10.5px;color:#0a0a3a">50.0</div>
<div class="p" style="left:360px;top:515px;width:90px;height:8px;background:#fff"></div>

</div>
</body></html>
